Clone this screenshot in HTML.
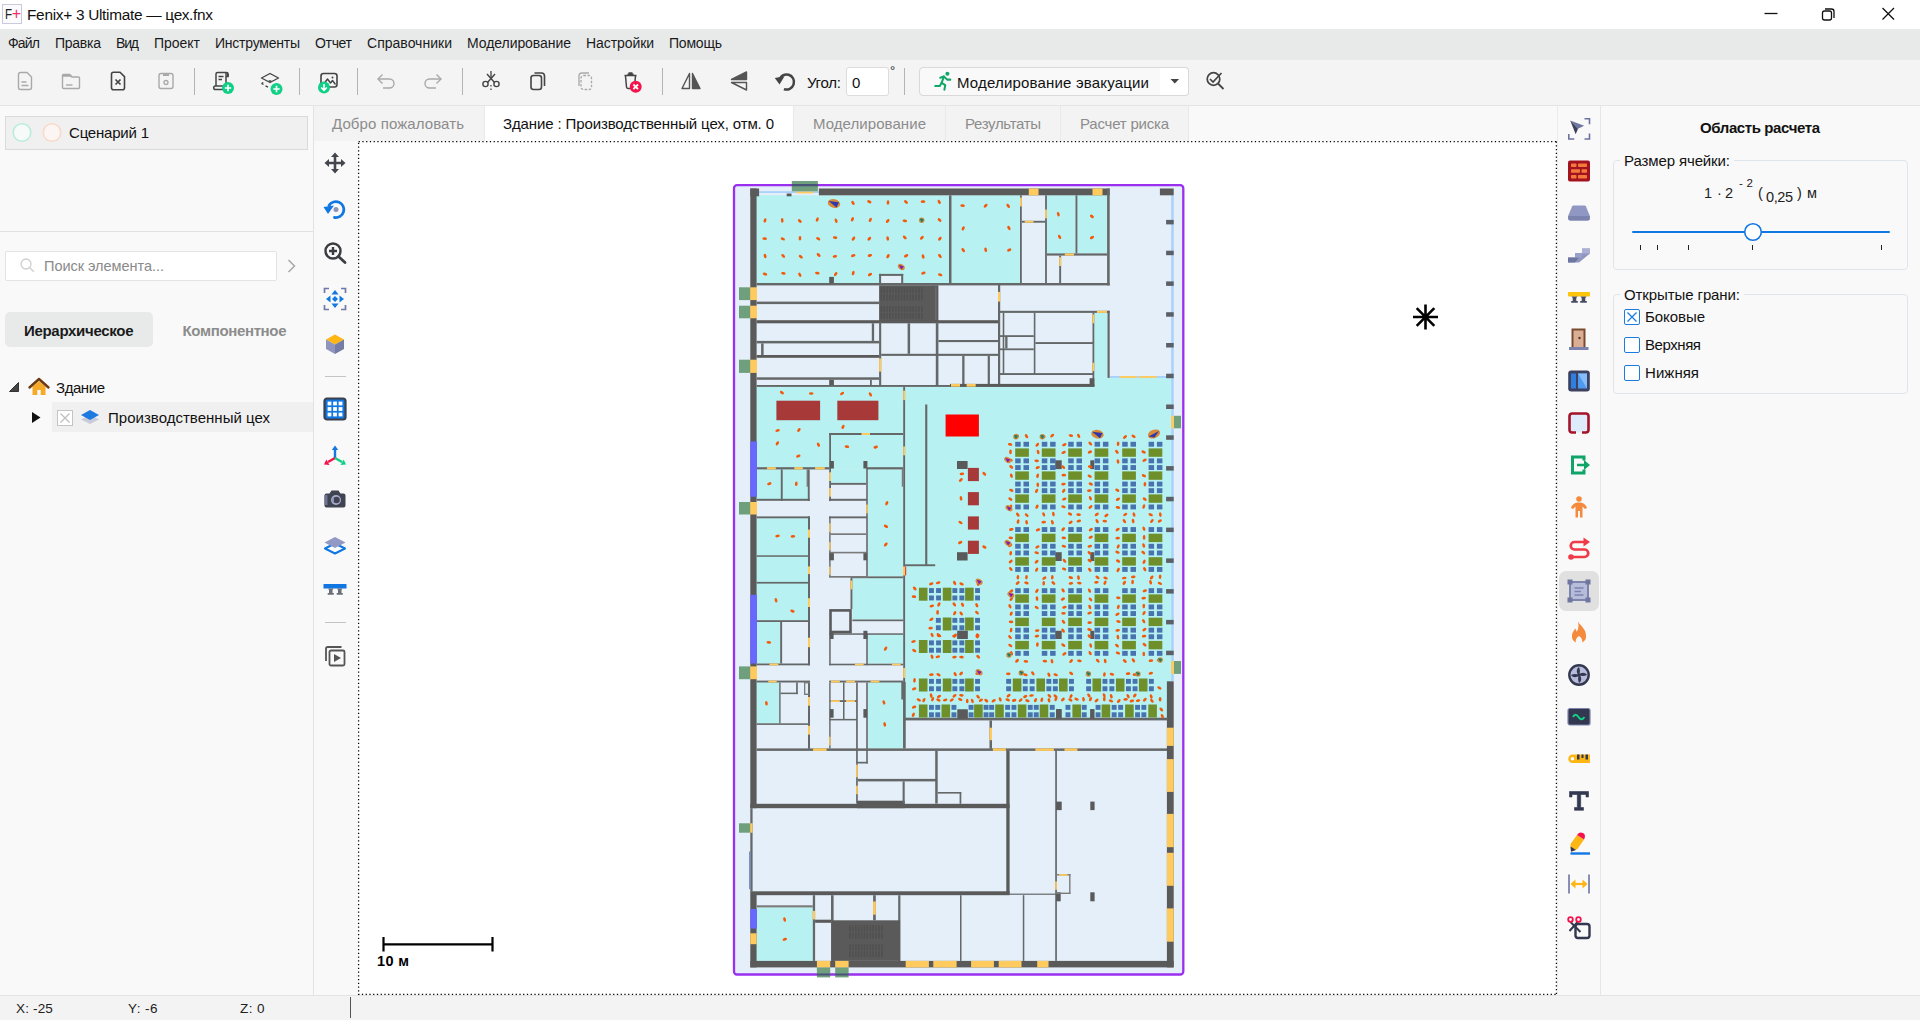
<!DOCTYPE html><html lang="ru"><head><meta charset="utf-8"><title>Fenix+ 3 Ultimate — цех.fnx</title><style>
*{box-sizing:border-box;margin:0;padding:0}
html,body{width:1920px;height:1020px;overflow:hidden;background:#fff}
body{font-family:"Liberation Sans","DejaVu Sans",sans-serif;color:#111;position:relative;font-size:14px}
.abs{position:absolute}
.t{position:absolute;white-space:nowrap;line-height:1}
svg{position:absolute;overflow:visible}
</style></head><body>
<div class="abs" style="left:0px;top:0px;width:1920px;height:29px;background:#ffffff;"></div>
<div class="abs" style="left:0px;top:29px;width:1920px;height:31px;background:#e8eaea;"></div>
<div class="abs" style="left:0px;top:60px;width:1920px;height:46px;background:#f4f4f4;"></div>
<div class="abs" style="left:0px;top:105px;width:1920px;height:1px;background:#e4e4e4;"></div>
<div class="abs" style="left:0px;top:106px;width:313px;height:889px;background:#f9f9f9;"></div>
<div class="abs" style="left:313px;top:106px;width:1px;height:889px;background:#e2e2e2;"></div>
<div class="abs" style="left:314px;top:106px;width:1287px;height:889px;background:#f9f9f9;"></div>
<div class="abs" style="left:1600px;top:106px;width:1.3px;height:889px;background:#e6e6e6;"></div>
<div class="abs" style="left:1557.3px;top:106px;width:1px;height:889px;background:#ececec;"></div>
<div class="abs" style="left:1601px;top:106px;width:319px;height:889px;background:#f9f9f9;"></div>
<div class="abs" style="left:0px;top:995px;width:1920px;height:25px;background:#f3f3f3;"></div>
<div class="abs" style="left:0px;top:995px;width:1920px;height:1px;background:#e4e4e4;"></div>
<div class="abs" style="left:2px;top:4px;width:20px;height:20px;background:#fbfbfd;border:1px solid #c9cbdc;"></div>
<div class="t" style="left:5.1px;top:6.63px;font-size:14.5px;font-weight:400;color:#222;letter-spacing:0.000px;transform:scaleX(.8);transform-origin:0 0;">F</div>
<div class="t" style="left:11.7px;top:5.71px;font-size:16px;font-weight:400;color:#f0306a;letter-spacing:0.000px;">+</div>
<div class="t" style="left:27px;top:6.86px;font-size:15.4px;font-weight:400;color:#111;letter-spacing:-0.288px;">Fenix+ 3 Ultimate — цех.fnx</div>
<svg style="left:1760px;top:4px" width="140" height="22" viewBox="0 0 140 22"><path d="M4.5 9.5h13" stroke="#111" stroke-width="1.3" fill="none"/><rect x="62.5" y="7" width="9" height="9" rx="2" fill="none" stroke="#111" stroke-width="1.3"/><path d="M65 5h6.5a2.5 2.5 0 0 1 2.5 2.5v6.500" fill="none" stroke="#111" stroke-width="1.3"/><path d="M122.500 4l11.500 11.500M134 4l-11.500 11.500" stroke="#111" stroke-width="1.3" fill="none"/></svg>
<div class="t" style="left:8px;top:36.15px;font-size:14px;font-weight:400;color:#1a1a1a;letter-spacing:-0.807px;">Файл</div>
<div class="t" style="left:55px;top:36.15px;font-size:14px;font-weight:400;color:#1a1a1a;letter-spacing:-0.259px;">Правка</div>
<div class="t" style="left:116px;top:36.15px;font-size:14px;font-weight:400;color:#1a1a1a;letter-spacing:-1.164px;">Вид</div>
<div class="t" style="left:154px;top:36.15px;font-size:14px;font-weight:400;color:#1a1a1a;letter-spacing:-0.025px;">Проект</div>
<div class="t" style="left:215px;top:36.15px;font-size:14px;font-weight:400;color:#1a1a1a;letter-spacing:-0.230px;">Инструменты</div>
<div class="t" style="left:315px;top:36.15px;font-size:14px;font-weight:400;color:#1a1a1a;letter-spacing:-0.336px;">Отчет</div>
<div class="t" style="left:367px;top:36.15px;font-size:14px;font-weight:400;color:#1a1a1a;letter-spacing:0.017px;">Справочники</div>
<div class="t" style="left:467px;top:36.15px;font-size:14px;font-weight:400;color:#1a1a1a;letter-spacing:-0.064px;">Моделирование</div>
<div class="t" style="left:586px;top:36.15px;font-size:14px;font-weight:400;color:#1a1a1a;letter-spacing:-0.082px;">Настройки</div>
<div class="t" style="left:669px;top:36.15px;font-size:14px;font-weight:400;color:#1a1a1a;letter-spacing:-0.216px;">Помощь</div>
<svg style="left:13.0px;top:69.2px" width="24" height="24" viewBox="0 0 24 24"><path d="M7.500 3.5h6.500l4.500 4.500v10.500a2 2 0 0 1-2 2h-9a2 2 0 0 1-2-2v-13a2 2 0 0 1 2-2z" fill="none" stroke="#a9a9a9" stroke-width="1.4"/><path d="M8.500 13h5M8.500 16.500h7" stroke="#a9a9a9" stroke-width="1.4" fill="none"/></svg>
<svg style="left:59.0px;top:69.2px" width="24" height="24" viewBox="0 0 24 24"><path d="M3.500 7v11.500a1 1 0 0 0 1 1h15a1 1 0 0 0 1-1v-9.500a1 1 0 0 0-1-1h-6.500l-2.500-2.500h-6a1 1 0 0 0-1 1z" fill="none" stroke="#a9a9a9" stroke-width="1.4"/><path d="M3.500 5.200h8l2 2.500h-10z" fill="#a9a9a9"/><path d="M7 16h6.500" stroke="#a9a9a9" stroke-width="1.4"/></svg>
<svg style="left:106.0px;top:69.2px" width="24" height="24" viewBox="0 0 24 24"><path d="M7.500 3.200h6.500l4.500 4.500v11a2 2 0 0 1-2 2h-9a2 2 0 0 1-2-2v-13.500a2 2 0 0 1 2-2z" fill="none" stroke="#444" stroke-width="1.6"/><path d="M9.500 10.500l5 5M14.500 10.500l-5 5" stroke="#444" stroke-width="1.7" fill="none"/></svg>
<svg style="left:154.0px;top:69.2px" width="24" height="24" viewBox="0 0 24 24"><rect x="5" y="4.500" width="14" height="15" rx="2" fill="none" stroke="#a9a9a9" stroke-width="1.4"/><rect x="9" y="5" width="6" height="2" fill="#a9a9a9"/><circle cx="12" cy="13.500" r="2" fill="none" stroke="#a9a9a9" stroke-width="1.3"/></svg>
<div class="abs" style="left:193.85px;top:68px;width:1.3px;height:27px;background:#b4b4b4;"></div>
<svg style="left:210.0px;top:69.2px" width="24" height="24" viewBox="0 0 24 24"><path d="M6 17v-12a1.500 1.500 0 0 1 1.500-1.500h9a1.500 1.500 0 0 1 1.500 1.500v2.500h-2" fill="none" stroke="#444" stroke-width="1.5"/><path d="M16 4v12.500" stroke="#444" stroke-width="1.500"/><path d="M17 3.500v4h1.800v-2.500z" fill="#444"/><path d="M8.500 7.500h5M8.500 10.500h3.500" stroke="#444" stroke-width="1.4"/><path d="M16 17h-10.500a1.800 1.800 0 0 0 0 3.600h9" fill="none" stroke="#444" stroke-width="1.5"/><circle cx="18" cy="19" r="6" fill="#10cf86"/><path d="M14.8 19h6.400M18 15.8v6.400" stroke="#fff" stroke-width="1.7"/></svg>
<svg style="left:258.0px;top:69.2px" width="24" height="24" viewBox="0 0 24 24"><path d="M3.500 9l8.500-4.500l8.500 4.500l-8.500 4.500z" fill="none" stroke="#444" stroke-width="1.4" stroke-linejoin="round"/><path d="M10 12l2-1l2 1l-2 1z" fill="#444"/><path d="M3.500 14.500l1.800-1M3.500 14.500l2 1M7.500 16.800l2.500 1.300" stroke="#444" stroke-width="1.3" fill="none"/><circle cx="18.5" cy="20" r="6" fill="#10cf86"/><path d="M15.3 20h6.400M18.5 16.8v6.400" stroke="#fff" stroke-width="1.7"/></svg>
<div class="abs" style="left:298.85px;top:68px;width:1.3px;height:27px;background:#b4b4b4;"></div>
<svg style="left:315.5px;top:69.2px" width="24" height="24" viewBox="0 0 24 24"><rect x="5" y="4.500" width="16" height="13.500" rx="2.500" fill="none" stroke="#444" stroke-width="1.6"/><path d="M7 16l4.500-6l3 4l2-2.500l3 4" fill="none" stroke="#444" stroke-width="1.4" stroke-linejoin="round"/><circle cx="16.500" cy="8.500" r="1" fill="#444"/><circle cx="8" cy="18.500" r="6" fill="#10cf86"/><path d="M8 15v6M5.200 18.500l2.800 2.800l2.800-2.800" stroke="#fff" stroke-width="1.600" fill="none"/></svg>
<div class="abs" style="left:356.85px;top:68px;width:1.3px;height:27px;background:#b4b4b4;"></div>
<svg style="left:374.0px;top:69.2px" width="24" height="24" viewBox="0 0 24 24"><path d="M8.500 5.500l-4.500 4.500l4.500 4.500" fill="none" stroke="#a9a9a9" stroke-width="1.400"/><path d="M4.500 10h11a4.500 4.500 0 0 1 0 9h-6.500" fill="none" stroke="#a9a9a9" stroke-width="1.400"/></svg>
<svg style="left:421.0px;top:69.2px" width="24" height="24" viewBox="0 0 24 24"><path d="M15.500 5.500l4.500 4.500l-4.500 4.500" fill="none" stroke="#a9a9a9" stroke-width="1.400"/><path d="M19.500 10h-11a4.500 4.500 0 0 0 0 9h6.500" fill="none" stroke="#a9a9a9" stroke-width="1.400"/></svg>
<div class="abs" style="left:461.85px;top:68px;width:1.3px;height:27px;background:#b4b4b4;"></div>
<svg style="left:479.0px;top:69.2px" width="24" height="24" viewBox="0 0 24 24"><path d="M12 2v7M12 16v1.500M12 19.500v1.500" stroke="#444" stroke-width="1.3"/><path d="M8 5l7.500 8.500M16 5l-7.500 8.500" stroke="#444" stroke-width="1.4"/><circle cx="6.500" cy="15" r="2.600" fill="none" stroke="#444" stroke-width="1.4"/><circle cx="17.500" cy="15" r="2.600" fill="none" stroke="#444" stroke-width="1.4"/></svg>
<svg style="left:526.0px;top:69.2px" width="24" height="24" viewBox="0 0 24 24"><rect x="5" y="6.500" width="10.500" height="14" rx="2.500" fill="none" stroke="#444" stroke-width="1.600"/><path d="M8.500 4h7a3 3 0 0 1 3 3v10" fill="none" stroke="#444" stroke-width="1.600"/></svg>
<svg style="left:574.0px;top:69.2px" width="24" height="24" viewBox="0 0 24 24"><rect x="7" y="6.500" width="10.500" height="14" rx="2.500" fill="none" stroke="#a9a9a9" stroke-width="1.300" stroke-dasharray="2.500 1.500"/><path d="M5 17v-10a3 3 0 0 1 3-3h7" fill="none" stroke="#a9a9a9" stroke-width="1.300"/></svg>
<svg style="left:619.0px;top:69.2px" width="24" height="24" viewBox="0 0 24 24"><path d="M5.500 6.500h12M9.500 4h4M8.500 5.200h6" stroke="#444" stroke-width="1.500" fill="none"/><path d="M6.500 7l1 11a1.500 1.500 0 0 0 1.500 1.400h3" fill="none" stroke="#444" stroke-width="1.500"/><path d="M16.500 7l-.5 5" stroke="#444" stroke-width="1.500"/><circle cx="16.700" cy="17.800" r="6" fill="#f5124d"/><path d="M14.400 15.500l4.600 4.600M19 15.500l-4.600 4.600" stroke="#fff" stroke-width="1.800"/></svg>
<div class="abs" style="left:661.85px;top:68px;width:1.3px;height:27px;background:#b4b4b4;"></div>
<svg style="left:679.0px;top:69.2px" width="24" height="24" viewBox="0 0 24 24"><path d="M10.500 4.500v15h-7.500z" fill="none" stroke="#555" stroke-width="1.400" stroke-linejoin="round"/><path d="M13.500 4.500v15h7.500z" fill="#555" stroke="#555" stroke-width="1.400" stroke-linejoin="round"/></svg>
<svg style="left:727.0px;top:69.2px" width="24" height="24" viewBox="0 0 24 24"><path d="M19.500 10.500h-15l15-7.500z" fill="#555" stroke="#555" stroke-width="1.400" stroke-linejoin="round"/><path d="M19.500 13.500h-15l15 7.500z" fill="none" stroke="#555" stroke-width="1.400" stroke-linejoin="round"/></svg>
<svg style="left:774.0px;top:69.2px" width="24" height="24" viewBox="0 0 24 24"><path d="M5.260 11.060A7.500 7.500 0 1 1 9.930 20.050" fill="none" stroke="#444" stroke-width="2.500"/><path d="M0.800 9l9.700-1.800l-5 8.300z" fill="#444"/></svg>
<div class="t" style="left:807px;top:74.60px;font-size:15px;font-weight:400;color:#111;letter-spacing:-0.234px;">Угол:</div>
<div class="abs" style="left:845.5px;top:66.5px;width:43px;height:29px;background:#fff;border:1px solid #dcdcdc;border-radius:3px;"></div>
<div class="t" style="left:852px;top:74.60px;font-size:15px;font-weight:400;color:#111;letter-spacing:0.000px;">0</div>
<div class="t" style="left:890px;top:63.50px;font-size:13px;font-weight:400;color:#222;letter-spacing:0.000px;">°</div>
<div class="abs" style="left:903.85px;top:68px;width:1.3px;height:27px;background:#b4b4b4;"></div>
<div class="abs" style="left:919px;top:66.5px;width:241.5px;height:29.5px;background:#f9f9f9;border:1px solid #d9d9d9;border-radius:4px 0 0 4px;"></div>
<div class="abs" style="left:1160px;top:66.5px;width:28.5px;height:29.5px;background:#ffffff;border:1px solid #d9d9d9;border-left:none;border-radius:0 4px 4px 0;"></div>
<svg style="left:932.0px;top:70.0px" width="22" height="22" viewBox="0 0 24 24"><g fill="none" stroke="#10a868" stroke-width="2.200" stroke-linecap="round" stroke-linejoin="round"><path d="M9 8.500l4-1.500l-2.500 7l4 2.500l-1 5"/><path d="M13 7l3.500 3.500h3.500"/><path d="M10.500 14l-2 3.500h-5"/></g><circle cx="16.800" cy="4.200" r="2.200" fill="#10a868"/></svg>
<div class="t" style="left:957px;top:74.70px;font-size:15px;font-weight:400;color:#111;letter-spacing:0.183px;">Моделирование эвакуации</div>
<svg style="left:1169px;top:77px" width="12" height="8" viewBox="0 0 12 8"><path d="M1.500 2h8.600l-4.300 4.600z" fill="#444"/></svg>
<svg style="left:1203.0px;top:69.2px" width="24" height="24" viewBox="0 0 24 24"><circle cx="10.500" cy="10" r="6.300" fill="none" stroke="#444" stroke-width="1.700"/><path d="M15 14.500l5.500 5.500" stroke="#444" stroke-width="1.800"/><path d="M7 10l3 3l8.500-9" fill="none" stroke="#444" stroke-width="1.700"/></svg>
<div class="abs" style="left:5px;top:116px;width:303px;height:33.5px;background:#f0f0f0;border:1px solid #dadada;"></div>
<svg style="left:11px;top:121px" width="52" height="24" viewBox="0 0 52 24"><circle cx="11" cy="11.500" r="8.800" fill="#f6fbf9" stroke="#b9ecd9" stroke-width="1.600"/><circle cx="41" cy="11.500" r="8.800" fill="#fbf6f3" stroke="#f9d9c8" stroke-width="1.600"/></svg>
<div class="t" style="left:69px;top:125.30px;font-size:15px;font-weight:400;color:#111;letter-spacing:-0.205px;">Сценарий 1</div>
<div class="abs" style="left:0px;top:231px;width:313px;height:1px;background:#e2e2e2;"></div>
<div class="abs" style="left:5px;top:250.5px;width:271.5px;height:30px;background:#fff;border:1px solid #e3e3e3;border-radius:2px;"></div>
<svg style="left:19px;top:257px" width="18" height="18" viewBox="0 0 18 18"><circle cx="7" cy="7" r="5" fill="none" stroke="#cfcfcf" stroke-width="1.300"/><path d="M10.800 10.800l4 4" stroke="#cfcfcf" stroke-width="1.300"/></svg>
<div class="t" style="left:44px;top:259.23px;font-size:14.5px;font-weight:400;color:#8a8a8a;letter-spacing:-0.030px;">Поиск элемента...</div>
<svg style="left:285px;top:258px" width="14" height="16" viewBox="0 0 14 16"><path d="M3.500 2l6 6l-6 6" fill="none" stroke="#a8a8a8" stroke-width="1.500"/></svg>
<div class="abs" style="left:5px;top:312px;width:148px;height:34.5px;background:#e8eaea;border-radius:5px;"></div>
<div class="t" style="left:24px;top:322.80px;font-size:15px;font-weight:700;color:#1a1a1a;letter-spacing:-0.306px;-webkit-text-stroke:0">Иерархическое</div>
<div class="t" style="left:182.5px;top:322.80px;font-size:15px;font-weight:700;color:#8c8c8c;letter-spacing:-0.347px;">Компонентное</div>
<svg style="left:8px;top:381px" width="12" height="12" viewBox="0 0 12 12"><path d="M10.500 1.500v9h-9z" fill="#444" stroke="#333" stroke-width="1"/></svg>
<svg style="left:28px;top:377px" width="22" height="20" viewBox="0 0 22 20"><path d="M4.500 9.500v8.500h4.800v-5h3.400v5h4.800v-8.500l-6.500-5.500z" fill="#f7a928"/><path d="M1.500 10.500l9.500-8.500l9.500 8.500" fill="none" stroke="#6b3a12" stroke-width="2.400" stroke-linejoin="round" stroke-linecap="round"/></svg>
<div class="t" style="left:56px;top:380.30px;font-size:15px;font-weight:400;color:#111;letter-spacing:-0.434px;">Здание</div>
<div class="abs" style="left:52px;top:402px;width:261px;height:30px;background:#f0f0f0;"></div>
<svg style="left:31px;top:411px" width="10" height="13" viewBox="0 0 10 13"><path d="M1 1v11l8.500-5.500z" fill="#111"/></svg>
<div class="abs" style="left:57px;top:409.5px;width:16px;height:16px;background:#fff;border:1px solid #c4c4c4;"></div>
<svg style="left:57px;top:409.5px" width="16" height="16" viewBox="0 0 16 16"><path d="M3.500 3.500l9 9M12.500 3.500l-9 9" stroke="#bdbdbd" stroke-width="1.200"/></svg>
<svg style="left:79px;top:407px" width="22" height="20" viewBox="0 0 22 20"><path d="M2 12.500l9 4.500l9-4.500l-9-4.500z" fill="#c9cbdb"/><path d="M2 8l9-5l9 5l-9 5z" fill="#1f7ae0"/></svg>
<div class="t" style="left:108px;top:410.30px;font-size:15px;font-weight:400;color:#111;letter-spacing:0.019px;">Производственный цех</div>
<div class="abs" style="left:314px;top:106px;width:874.5px;height:34.5px;background:#f3f3f3;"></div>
<div class="abs" style="left:484px;top:106px;width:309px;height:34.5px;background:#ffffff;"></div>
<div class="abs" style="left:484px;top:106px;width:1px;height:34.5px;background:#e9e9e9;"></div>
<div class="abs" style="left:793px;top:106px;width:1px;height:34.5px;background:#e9e9e9;"></div>
<div class="abs" style="left:945px;top:106px;width:1px;height:34.5px;background:#e9e9e9;"></div>
<div class="abs" style="left:1060px;top:106px;width:1px;height:34.5px;background:#e9e9e9;"></div>
<div class="abs" style="left:1188px;top:106px;width:1px;height:34.5px;background:#e9e9e9;"></div>
<div class="abs" style="left:314px;top:106px;width:870px;height:34.5px;"></div>
<div class="t" style="left:332px;top:115.70px;font-size:15px;font-weight:400;color:#8c8c8c;letter-spacing:0.097px;">Добро пожаловать</div>
<div class="t" style="left:503px;top:115.70px;font-size:15px;font-weight:400;color:#111;letter-spacing:-0.125px;">Здание : Производственный цех, отм. 0</div>
<div class="t" style="left:813px;top:115.70px;font-size:15px;font-weight:400;color:#8c8c8c;letter-spacing:0.062px;">Моделирование</div>
<div class="t" style="left:965px;top:115.70px;font-size:15px;font-weight:400;color:#8c8c8c;letter-spacing:-0.333px;">Результаты</div>
<div class="t" style="left:1080px;top:115.70px;font-size:15px;font-weight:400;color:#8c8c8c;letter-spacing:-0.213px;">Расчет риска</div>
<svg style="left:323.0px;top:151.0px" width="24" height="24" viewBox="0 0 24 24"><path d="M12 1.500l4 4.500h-2.700v4.700h4.700v-2.700l4.500 4l-4.500 4v-2.700h-4.700v4.700h2.700l-4 4.500l-4-4.500h2.700v-4.700h-4.700v2.700l-4.500-4l4.500-4v2.700h4.700v-4.700h-2.700z" fill="#43464d"/></svg>
<svg style="left:323.0px;top:197.0px" width="24" height="24" viewBox="0 0 24 24"><path d="M6 8.500a8 8 0 1 1 5.500 12" fill="none" stroke="#1177e2" stroke-width="2.800" stroke-linecap="round"/><path d="M0.500 10l10.500-1.500l-6 8.500z" fill="#1177e2"/><circle cx="13" cy="12.500" r="2.500" fill="#8d93b8"/></svg>
<svg style="left:323.0px;top:241.0px" width="24" height="24" viewBox="0 0 24 24"><circle cx="10" cy="10" r="7.500" fill="none" stroke="#3a3d42" stroke-width="2.400"/><path d="M15.500 15.500l6.500 6" stroke="#3a3d42" stroke-width="2.800" stroke-linecap="round"/><path d="M6 10h8M10 6v8" stroke="#3a3d42" stroke-width="2.400"/></svg>
<svg style="left:323.0px;top:287.0px" width="24" height="24" viewBox="0 0 24 24"><path d="M1.500 6v-4.500h4.500M18 1.500h4.500v4.500M22.500 18v4.500h-4.500M6 22.500h-4.500v-4.500" fill="none" stroke="#7079a6" stroke-width="1.700"/><g fill="#1177e2"><path d="M12 3l3.600 4.500h-7.200z"/><path d="M12 21l3.600-4.500h-7.200z"/><path d="M3 12l4.500-3.600v7.200z"/><path d="M21 12l-4.500-3.600v7.200z"/><path d="M9 12l3-3l3 3l-3 3z"/></g></svg>
<svg style="left:323.0px;top:332.0px" width="24" height="24" viewBox="0 0 24 24"><path d="M12 2.500l9 5l-9 5l-9-5z" fill="#fdb614"/><path d="M3 7.500l9 5v9.500l-9-5z" fill="#8f95bd"/><path d="M21 7.500l-9 5v9.500l9-5z" fill="#757ca5"/></svg>
<div class="abs" style="left:325px;top:376px;width:21px;height:1.3px;background:#c4c4c4;"></div>
<svg style="left:323.0px;top:397.0px" width="24" height="24" viewBox="0 0 24 24"><rect x="1.500" y="1.500" width="21" height="21" rx="2.500" fill="#1177e2" stroke="#3a3f4b" stroke-width="2.200"/><g fill="#fff"><rect x="4.600" y="4.600" width="3.800" height="3.800"/><rect x="10.100" y="4.600" width="3.800" height="3.800"/><rect x="15.600" y="4.600" width="3.800" height="3.800"/><rect x="4.600" y="10.100" width="3.800" height="3.800"/><rect x="10.100" y="10.100" width="3.800" height="3.800"/><rect x="15.600" y="10.100" width="3.800" height="3.800"/><rect x="4.600" y="15.600" width="3.800" height="3.800"/><rect x="10.100" y="15.600" width="3.800" height="3.800"/><rect x="15.600" y="15.600" width="3.800" height="3.800"/></g></svg>
<svg style="left:323.0px;top:444.0px" width="24" height="24" viewBox="0 0 24 24"><path d="M12 5v9" stroke="#1177e2" stroke-width="2.400"/><path d="M12 1.500l3.200 4.500h-6.400z" fill="#1177e2"/><path d="M12 14l-7 4" stroke="#f5124d" stroke-width="2.400"/><path d="M1 20.500l2.300-5l3.200 5.500z" fill="#f5124d"/><path d="M12 14l7 4" stroke="#10cf86" stroke-width="2.400"/><path d="M23 20.500l-2.300-5l-3.200 5.500z" fill="#10cf86"/></svg>
<svg style="left:323.0px;top:487.0px" width="24" height="24" viewBox="0 0 24 24"><path d="M3.500 6.500h3l2-3h7l2 3h3a2 2 0 0 1 2 2v10a2 2 0 0 1-2 2h-17a2 2 0 0 1-2-2v-10a2 2 0 0 1 2-2z" fill="#3f4450"/><rect x="1.500" y="8" width="3" height="10" fill="#6d7391"/><circle cx="13" cy="13" r="5" fill="#a9aed0"/><circle cx="13.500" cy="13" r="3.300" fill="#3f4450"/><path d="M11 9.500a4 4 0 0 0 0 7z" fill="#8d93b8"/></svg>
<svg style="left:323.0px;top:534.0px" width="24" height="24" viewBox="0 0 24 24"><path d="M2 14.500l10-5l10 5l-10 5z" fill="#fff" stroke="#1177e2" stroke-width="2" stroke-linejoin="round"/><path d="M1.500 8.500l10.500-5.500l10.500 5.500l-10.500 5.500z" fill="#9299c4"/></svg>
<svg style="left:323.0px;top:577.0px" width="24" height="24" viewBox="0 0 24 24"><rect x="0.500" y="7" width="23" height="4.500" fill="#1177e2"/><path d="M5 11.500h5.500l-1 1.500v3h1.300v1.800h-6.100v-1.800h1.300v-3zM14 11.500h5.500l-1 1.500v3h1.300v1.800h-6.100v-1.800h1.300v-3z" fill="#6b6f7a"/></svg>
<div class="abs" style="left:325px;top:622px;width:21px;height:1.3px;background:#c4c4c4;"></div>
<svg style="left:323.0px;top:644.0px" width="24" height="24" viewBox="0 0 24 24"><path d="M3 17v-12.500a1.500 1.500 0 0 1 1.500-1.500h14" fill="none" stroke="#555" stroke-width="1.800"/><rect x="6.500" y="6.500" width="15" height="15" rx="1.500" fill="none" stroke="#555" stroke-width="1.800"/><path d="M11 10v8l7-4z" fill="#555"/></svg>
<div class="abs" style="left:358px;top:141px;width:1199.3px;height:854.3px;background:#ffffff;"></div>
<svg style="left:0;top:0" width="1920" height="1020" viewBox="0 0 1920 1020"><g fill="none" stroke="#000" stroke-width="1.250" stroke-dasharray="1.250 2.500"><path d="M358.600 141.600H1557"/><path d="M358.125 994.400H1557"/><path d="M358.600 142.800V995"/><path d="M1556.400 141.375V995"/></g><rect x="734" y="185.2" width="449.300" height="789.300" rx="3" fill="#e4eff9" stroke="#9a2ff0" stroke-width="2.300"/><rect x="756.6" y="195.3" width="192.4" height="87.9" fill="#b7f1f1"/><rect x="951.5" y="195.3" width="68.5" height="87.9" fill="#b7f1f1"/><rect x="1046.9" y="195.3" width="28.6" height="58.1" fill="#b7f1f1"/><rect x="1077.4" y="195.3" width="29.7" height="58.1" fill="#b7f1f1"/><rect x="756.6" y="386.9" width="146.6" height="82.5" fill="#b7f1f1"/><rect x="756.6" y="469.4" width="51.4" height="29.6" fill="#b7f1f1"/><rect x="831.0" y="469.4" width="35.2" height="13.5" fill="#b7f1f1"/><rect x="867.8" y="469.4" width="35.4" height="107.0" fill="#b7f1f1"/><rect x="905.1" y="386.9" width="266.1" height="330.8" fill="#b7f1f1"/><rect x="1094.3" y="377.9" width="76.9" height="9.0" fill="#b7f1f1"/><rect x="1094.3" y="312.9" width="13.2" height="65.0" fill="#b7f1f1"/><rect x="756.6" y="518.3" width="51.4" height="101.9" fill="#b7f1f1"/><rect x="756.6" y="622.0" width="23.6" height="41.5" fill="#b7f1f1"/><rect x="852.4" y="578.2" width="50.8" height="41.3" fill="#b7f1f1"/><rect x="867.8" y="634.6" width="35.4" height="28.9" fill="#b7f1f1"/><rect x="756.6" y="682.5" width="22.6" height="40.8" fill="#b7f1f1"/><rect x="867.8" y="682.5" width="35.4" height="65.9" fill="#b7f1f1"/><rect x="756.6" y="907.4" width="56.2" height="53.5" fill="#b7f1f1"/><rect x="1171.2" y="195.3" width="2.5" height="485.7" fill="#a8d1fb"/><rect x="1109.7" y="376.0" width="61.5" height="1.9" fill="#a8d1fb"/><rect x="759.1" y="191.2" width="59.8" height="1.8" fill="#a8d1fb"/><rect x="1159.9" y="188.5" width="13.8" height="6.8" fill="#5a5a5a"/><rect x="1166.1" y="219.9" width="7.6" height="4.5" fill="#5c5f66"/><rect x="1166.1" y="250.7" width="7.6" height="4.5" fill="#5c5f66"/><rect x="1166.1" y="281.4" width="7.6" height="4.5" fill="#5c5f66"/><rect x="1166.1" y="312.2" width="7.6" height="4.5" fill="#5c5f66"/><rect x="1166.1" y="343.0" width="7.6" height="4.5" fill="#5c5f66"/><rect x="1166.1" y="373.7" width="7.6" height="4.5" fill="#5c5f66"/><rect x="1166.1" y="404.5" width="7.6" height="4.5" fill="#5c5f66"/><rect x="1166.1" y="435.3" width="7.6" height="4.5" fill="#5c5f66"/><rect x="1166.1" y="466.1" width="7.6" height="4.5" fill="#5c5f66"/><rect x="1166.1" y="496.8" width="7.6" height="4.5" fill="#5c5f66"/><rect x="1166.1" y="527.6" width="7.6" height="4.5" fill="#5c5f66"/><rect x="1166.1" y="558.4" width="7.6" height="4.5" fill="#5c5f66"/><rect x="1166.1" y="589.1" width="7.6" height="4.5" fill="#5c5f66"/><rect x="1166.1" y="619.9" width="7.6" height="4.5" fill="#5c5f66"/><rect x="1166.1" y="650.7" width="7.6" height="4.5" fill="#5c5f66"/><rect x="881.1" y="275.9" width="20.1" height="7.3" fill="#e4eff9"/><rect x="750.3" y="188.5" width="6.3" height="619.7" fill="#5a5a5a"/><rect x="750.3" y="188.5" width="8.8" height="7.8" fill="#5a5a5a"/><rect x="818.9" y="188.5" width="290.8" height="6.8" fill="#5a5a5a"/><rect x="786.7" y="193.5" width="4.8" height="2.8" fill="#5a5a5a"/><rect x="1107.1" y="188.5" width="2.6" height="96.9" fill="#656868"/><rect x="750.3" y="803.8" width="259.3" height="4.4" fill="#5a5a5a"/><rect x="857.0" y="800.7" width="47.7" height="7.5" fill="#5a5a5a"/><rect x="750.3" y="808.2" width="2.3" height="83.3" fill="#656868"/><rect x="750.3" y="891.3" width="259.3" height="3.9" fill="#5a5a5a"/><rect x="750.3" y="895.0" width="6.3" height="72.4" fill="#5a5a5a"/><rect x="750.3" y="960.9" width="423.4" height="6.5" fill="#5a5a5a"/><rect x="1166.9" y="681.3" width="6.8" height="286.1" fill="#5a5a5a"/><rect x="949.0" y="195.3" width="2.5" height="87.9" fill="#656868"/><rect x="756.6" y="283.0" width="353.1" height="2.4" fill="#656868"/><rect x="829.2" y="276.9" width="4.7" height="6.3" fill="#5a5a5a"/><rect x="1020.0" y="195.3" width="1.8" height="87.9" fill="#656868"/><rect x="1045.1" y="195.3" width="1.8" height="87.9" fill="#656868"/><rect x="1021.8" y="220.8" width="23.3" height="1.9" fill="#656868"/><rect x="1075.5" y="195.3" width="1.9" height="58.1" fill="#656868"/><rect x="1046.9" y="253.4" width="60.2" height="2.2" fill="#656868"/><rect x="1059.2" y="255.6" width="1.9" height="27.6" fill="#656868"/><rect x="879.1" y="273.9" width="24.1" height="2.0" fill="#656868"/><rect x="879.1" y="273.9" width="2.0" height="9.3" fill="#656868"/><rect x="901.2" y="273.9" width="2.0" height="9.3" fill="#656868"/><rect x="879.1" y="285.3" width="59.3" height="36.7" fill="#5a5a5a"/><rect x="756.6" y="301.6" width="122.5" height="2.5" fill="#656868"/><rect x="756.6" y="320.2" width="241.4" height="3.1" fill="#5a5a5a"/><rect x="756.6" y="340.9" width="122.5" height="2.5" fill="#656868"/><rect x="756.6" y="355.0" width="122.5" height="2.8" fill="#5a5a5a"/><rect x="756.6" y="377.3" width="122.5" height="2.5" fill="#656868"/><rect x="756.6" y="385.0" width="337.7" height="1.9" fill="#656868"/><rect x="871.8" y="323.3" width="2.3" height="17.6" fill="#656868"/><rect x="761.1" y="343.4" width="2.5" height="11.6" fill="#656868"/><rect x="829.2" y="379.8" width="4.7" height="5.4" fill="#5a5a5a"/><rect x="870.0" y="379.8" width="1.8" height="5.4" fill="#656868"/><rect x="879.1" y="322.0" width="2.1" height="63.4" fill="#656868"/><rect x="907.6" y="323.3" width="2.5" height="30.5" fill="#656868"/><rect x="935.8" y="322.0" width="2.6" height="63.4" fill="#656868"/><rect x="881.2" y="353.8" width="116.8" height="2.1" fill="#656868"/><rect x="938.4" y="340.0" width="59.6" height="2.1" fill="#656868"/><rect x="962.2" y="355.9" width="2.3" height="29.3" fill="#656868"/><rect x="987.7" y="355.9" width="2.2" height="29.3" fill="#656868"/><rect x="998.0" y="285.0" width="2.2" height="100.4" fill="#656868"/><rect x="950.0" y="383.9" width="144.3" height="2.8" fill="#5a5a5a"/><rect x="1000.0" y="310.8" width="109.7" height="2.1" fill="#656868"/><rect x="1107.5" y="310.8" width="2.2" height="67.1" fill="#656868"/><rect x="1092.5" y="312.9" width="1.8" height="73.8" fill="#656868"/><rect x="1089.6" y="378.2" width="4.7" height="7.8" fill="#5a5a5a"/><rect x="1002.7" y="312.9" width="1.6" height="61.2" fill="#656868"/><rect x="1033.8" y="312.9" width="1.6" height="61.2" fill="#656868"/><rect x="1000.0" y="335.2" width="33.8" height="1.8" fill="#656868"/><rect x="1000.0" y="348.4" width="33.8" height="1.8" fill="#656868"/><rect x="1005.2" y="337.0" width="2.3" height="11.4" fill="#656868"/><rect x="1035.4" y="342.1" width="57.7" height="1.9" fill="#656868"/><rect x="1000.0" y="373.1" width="93.1" height="1.9" fill="#656868"/><rect x="903.2" y="386.9" width="1.9" height="361.5" fill="#656868"/><rect x="925.2" y="404.5" width="2.1" height="161.5" fill="#656868"/><rect x="905.1" y="564.3" width="30.1" height="1.9" fill="#656868"/><rect x="829.2" y="433.0" width="74.0" height="2.0" fill="#656868"/><rect x="829.2" y="433.0" width="1.8" height="68.1" fill="#656868"/><rect x="829.8" y="461.0" width="4.1" height="7.5" fill="#5a5a5a"/><rect x="863.4" y="461.0" width="4.0" height="7.5" fill="#5a5a5a"/><rect x="756.6" y="467.2" width="72.6" height="2.2" fill="#656868"/><rect x="866.2" y="467.2" width="37.0" height="2.2" fill="#656868"/><rect x="780.8" y="469.4" width="1.9" height="31.6" fill="#656868"/><rect x="807.8" y="469.4" width="1.9" height="31.6" fill="#656868"/><rect x="756.6" y="498.8" width="53.1" height="2.0" fill="#656868"/><rect x="829.2" y="498.8" width="37.8" height="2.0" fill="#656868"/><rect x="866.2" y="468.5" width="1.6" height="108.8" fill="#656868"/><rect x="831.0" y="482.9" width="35.2" height="1.9" fill="#656868"/><rect x="756.6" y="516.4" width="53.1" height="1.9" fill="#656868"/><rect x="829.2" y="516.4" width="37.8" height="1.9" fill="#656868"/><rect x="808.0" y="516.4" width="2.0" height="148.9" fill="#656868"/><rect x="756.6" y="555.3" width="51.4" height="1.5" fill="#656868"/><rect x="756.6" y="581.9" width="51.4" height="1.7" fill="#656868"/><rect x="756.6" y="620.2" width="51.4" height="1.8" fill="#656868"/><rect x="780.2" y="622.0" width="1.9" height="41.5" fill="#656868"/><rect x="756.6" y="663.5" width="53.4" height="1.8" fill="#656868"/><rect x="829.2" y="516.4" width="1.4" height="60.9" fill="#656868"/><rect x="829.4" y="552.5" width="4.5" height="7.8" fill="#5a5a5a"/><rect x="863.4" y="552.5" width="3.7" height="7.8" fill="#5a5a5a"/><rect x="851.1" y="576.4" width="52.1" height="1.8" fill="#656868"/><rect x="850.5" y="576.4" width="1.9" height="32.7" fill="#656868"/><rect x="852.4" y="619.5" width="50.8" height="1.7" fill="#656868"/><rect x="867.0" y="633.3" width="36.2" height="1.5" fill="#656868"/><rect x="866.2" y="633.3" width="1.6" height="32.0" fill="#656868"/><rect x="829.2" y="663.7" width="74.0" height="1.6" fill="#656868"/><rect x="829.2" y="633.3" width="1.5" height="32.0" fill="#656868"/><rect x="829.2" y="633.3" width="37.9" height="1.5" fill="#656868"/><rect x="829.8" y="630.8" width="3.8" height="8.2" fill="#5a5a5a"/><rect x="863.4" y="630.8" width="4.0" height="8.2" fill="#5a5a5a"/><rect x="756.6" y="680.6" width="53.4" height="1.9" fill="#656868"/><rect x="829.2" y="680.6" width="74.0" height="1.9" fill="#656868"/><rect x="779.2" y="682.5" width="1.4" height="40.8" fill="#656868"/><rect x="756.6" y="723.3" width="53.4" height="1.6" fill="#656868"/><rect x="780.5" y="692.6" width="17.3" height="1.5" fill="#656868"/><rect x="796.1" y="682.5" width="1.7" height="11.6" fill="#656868"/><rect x="808.0" y="682.5" width="2.0" height="66.3" fill="#656868"/><rect x="829.2" y="682.5" width="1.4" height="65.9" fill="#656868"/><rect x="843.0" y="682.5" width="1.5" height="37.4" fill="#656868"/><rect x="856.1" y="682.5" width="1.7" height="81.0" fill="#656868"/><rect x="866.2" y="682.5" width="1.6" height="81.0" fill="#656868"/><rect x="856.1" y="761.8" width="11.7" height="1.7" fill="#656868"/><rect x="830.4" y="700.2" width="26.6" height="1.8" fill="#656868"/><rect x="829.2" y="718.9" width="27.8" height="1.5" fill="#656868"/><rect x="829.8" y="709.1" width="3.8" height="8.6" fill="#5a5a5a"/><rect x="863.4" y="709.1" width="3.7" height="8.6" fill="#5a5a5a"/><rect x="901.3" y="681.9" width="2.5" height="17.6" fill="#656868"/><rect x="903.2" y="682.0" width="2.5" height="66.4" fill="#656868"/><rect x="904.7" y="717.7" width="263.1" height="2.7" fill="#656868"/><rect x="756.6" y="748.4" width="410.4" height="2.5" fill="#656868"/><rect x="989.5" y="720.4" width="2.5" height="28.4" fill="#656868"/><rect x="856.1" y="763.5" width="1.7" height="40.1" fill="#656868"/><rect x="857.8" y="778.9" width="79.3" height="2.5" fill="#656868"/><rect x="902.6" y="781.4" width="2.1" height="22.2" fill="#656868"/><rect x="935.2" y="750.9" width="2.5" height="52.7" fill="#656868"/><rect x="937.7" y="792.0" width="23.5" height="1.6" fill="#656868"/><rect x="959.6" y="792.0" width="1.7" height="11.8" fill="#656868"/><rect x="1006.3" y="750.9" width="3.3" height="143.9" fill="#5a5a5a"/><rect x="1055.2" y="750.9" width="1.7" height="210.0" fill="#656868"/><rect x="1009.6" y="893.6" width="47.1" height="1.2" fill="#656868"/><rect x="1056.1" y="801.6" width="5.6" height="8.5" fill="#5a5a5a"/><rect x="1090.3" y="801.6" width="4.3" height="8.5" fill="#5a5a5a"/><rect x="1056.1" y="892.3" width="4.6" height="9.0" fill="#5a5a5a"/><rect x="1090.3" y="892.3" width="4.3" height="9.0" fill="#5a5a5a"/><rect x="812.8" y="895.2" width="2.3" height="65.7" fill="#656868"/><rect x="831.0" y="895.2" width="2.6" height="65.7" fill="#656868"/><rect x="873.1" y="895.2" width="2.7" height="25.1" fill="#656868"/><rect x="898.2" y="895.2" width="2.2" height="65.7" fill="#656868"/><rect x="815.1" y="919.7" width="15.9" height="3.1" fill="#5a5a5a"/><rect x="831.7" y="920.3" width="68.4" height="40.6" fill="#5a5a5a"/><rect x="960.0" y="895.2" width="1.5" height="65.7" fill="#656868"/><rect x="1022.8" y="895.2" width="1.5" height="65.7" fill="#656868"/><rect x="830.4" y="533.3" width="35.8" height="1.7" fill="#7a7a7a"/><rect x="830.4" y="551.8" width="35.8" height="1.6" fill="#7a7a7a"/><rect x="829.2" y="576.0" width="38.6" height="1.7" fill="#7a7a7a"/><rect x="756.6" y="905.3" width="56.2" height="2.1" fill="#7a7a7a"/><rect x="806.6" y="469.4" width="1.4" height="17.3" fill="#7a7a7a"/><rect x="901.8" y="468.5" width="1.4" height="18.2" fill="#7a7a7a"/><rect x="804.0" y="682.0" width="5.3" height="1.4" fill="#7a7a7a"/><rect x="804.0" y="693.6" width="5.3" height="1.4" fill="#7a7a7a"/><rect x="804.0" y="682.0" width="1.3" height="13.0" fill="#7a7a7a"/><rect x="1055.4" y="874.1" width="15.1" height="1.4" fill="#7a7a7a"/><rect x="1069.1" y="874.1" width="1.4" height="19.9" fill="#7a7a7a"/><rect x="1055.4" y="892.6" width="15.1" height="1.4" fill="#7a7a7a"/><rect x="830.500" y="610.400" width="20" height="21.600" fill="#e4eff9" stroke="#5a5a5a" stroke-width="2.600"/><rect x="935.2" y="287.0" width="1.2" height="33.0" fill="#707070"/><rect x="880.5" y="287.0" width="1.6" height="6.2" fill="#505050"/><rect x="880.5" y="294.3" width="1.6" height="6.2" fill="#505050"/><rect x="883.4" y="287.0" width="1.6" height="6.2" fill="#505050"/><rect x="883.4" y="294.3" width="1.6" height="6.2" fill="#505050"/><rect x="886.3" y="287.0" width="1.6" height="6.2" fill="#505050"/><rect x="886.3" y="294.3" width="1.6" height="6.2" fill="#505050"/><rect x="889.2" y="287.0" width="1.6" height="6.2" fill="#505050"/><rect x="889.2" y="294.3" width="1.6" height="6.2" fill="#505050"/><rect x="892.1" y="287.0" width="1.6" height="6.2" fill="#505050"/><rect x="892.1" y="294.3" width="1.6" height="6.2" fill="#505050"/><rect x="895.0" y="287.0" width="1.6" height="6.2" fill="#505050"/><rect x="895.0" y="294.3" width="1.6" height="6.2" fill="#505050"/><rect x="897.9" y="287.0" width="1.6" height="6.2" fill="#505050"/><rect x="897.9" y="294.3" width="1.6" height="6.2" fill="#505050"/><rect x="900.8" y="287.0" width="1.6" height="6.2" fill="#505050"/><rect x="900.8" y="294.3" width="1.6" height="6.2" fill="#505050"/><rect x="903.7" y="287.0" width="1.6" height="6.2" fill="#505050"/><rect x="903.7" y="294.3" width="1.6" height="6.2" fill="#505050"/><rect x="906.6" y="287.0" width="1.6" height="6.2" fill="#505050"/><rect x="906.6" y="294.3" width="1.6" height="6.2" fill="#505050"/><rect x="909.5" y="287.0" width="1.6" height="6.2" fill="#505050"/><rect x="909.5" y="294.3" width="1.6" height="6.2" fill="#505050"/><rect x="912.4" y="287.0" width="1.6" height="6.2" fill="#505050"/><rect x="912.4" y="294.3" width="1.6" height="6.2" fill="#505050"/><rect x="915.3" y="287.0" width="1.6" height="6.2" fill="#505050"/><rect x="915.3" y="294.3" width="1.6" height="6.2" fill="#505050"/><rect x="918.2" y="287.0" width="1.6" height="6.2" fill="#505050"/><rect x="918.2" y="294.3" width="1.6" height="6.2" fill="#505050"/><rect x="921.1" y="287.0" width="1.6" height="6.2" fill="#505050"/><rect x="921.1" y="294.3" width="1.6" height="6.2" fill="#505050"/><rect x="880.5" y="306.0" width="1.6" height="5.8" fill="#505050"/><rect x="880.5" y="312.8" width="1.6" height="5.8" fill="#505050"/><rect x="883.4" y="306.0" width="1.6" height="5.8" fill="#505050"/><rect x="883.4" y="312.8" width="1.6" height="5.8" fill="#505050"/><rect x="886.3" y="306.0" width="1.6" height="5.8" fill="#505050"/><rect x="886.3" y="312.8" width="1.6" height="5.8" fill="#505050"/><rect x="889.2" y="306.0" width="1.6" height="5.8" fill="#505050"/><rect x="889.2" y="312.8" width="1.6" height="5.8" fill="#505050"/><rect x="892.1" y="306.0" width="1.6" height="5.8" fill="#505050"/><rect x="892.1" y="312.8" width="1.6" height="5.8" fill="#505050"/><rect x="895.0" y="306.0" width="1.6" height="5.8" fill="#505050"/><rect x="895.0" y="312.8" width="1.6" height="5.8" fill="#505050"/><rect x="897.9" y="306.0" width="1.6" height="5.8" fill="#505050"/><rect x="897.9" y="312.8" width="1.6" height="5.8" fill="#505050"/><rect x="900.8" y="306.0" width="1.6" height="5.8" fill="#505050"/><rect x="900.8" y="312.8" width="1.6" height="5.8" fill="#505050"/><rect x="903.7" y="306.0" width="1.6" height="5.8" fill="#505050"/><rect x="903.7" y="312.8" width="1.6" height="5.8" fill="#505050"/><rect x="906.6" y="306.0" width="1.6" height="5.8" fill="#505050"/><rect x="906.6" y="312.8" width="1.6" height="5.8" fill="#505050"/><rect x="909.5" y="306.0" width="1.6" height="5.8" fill="#505050"/><rect x="909.5" y="312.8" width="1.6" height="5.8" fill="#505050"/><rect x="912.4" y="306.0" width="1.6" height="5.8" fill="#505050"/><rect x="912.4" y="312.8" width="1.6" height="5.8" fill="#505050"/><rect x="915.3" y="306.0" width="1.6" height="5.8" fill="#505050"/><rect x="915.3" y="312.8" width="1.6" height="5.8" fill="#505050"/><rect x="918.2" y="306.0" width="1.6" height="5.8" fill="#505050"/><rect x="918.2" y="312.8" width="1.6" height="5.8" fill="#505050"/><rect x="921.1" y="306.0" width="1.6" height="5.8" fill="#505050"/><rect x="921.1" y="312.8" width="1.6" height="5.8" fill="#505050"/><rect x="849.2" y="925.3" width="1.6" height="6.1" fill="#505050"/><rect x="849.2" y="932.4" width="1.6" height="6.1" fill="#505050"/><rect x="852.1" y="925.3" width="1.6" height="6.1" fill="#505050"/><rect x="852.1" y="932.4" width="1.6" height="6.1" fill="#505050"/><rect x="855.0" y="925.3" width="1.6" height="6.1" fill="#505050"/><rect x="855.0" y="932.4" width="1.6" height="6.1" fill="#505050"/><rect x="857.9" y="925.3" width="1.6" height="6.1" fill="#505050"/><rect x="857.9" y="932.4" width="1.6" height="6.1" fill="#505050"/><rect x="860.8" y="925.3" width="1.6" height="6.1" fill="#505050"/><rect x="860.8" y="932.4" width="1.6" height="6.1" fill="#505050"/><rect x="863.7" y="925.3" width="1.6" height="6.1" fill="#505050"/><rect x="863.7" y="932.4" width="1.6" height="6.1" fill="#505050"/><rect x="866.6" y="925.3" width="1.6" height="6.1" fill="#505050"/><rect x="866.6" y="932.4" width="1.6" height="6.1" fill="#505050"/><rect x="869.5" y="925.3" width="1.6" height="6.1" fill="#505050"/><rect x="869.5" y="932.4" width="1.6" height="6.1" fill="#505050"/><rect x="872.4" y="925.3" width="1.6" height="6.1" fill="#505050"/><rect x="872.4" y="932.4" width="1.6" height="6.1" fill="#505050"/><rect x="875.3" y="925.3" width="1.6" height="6.1" fill="#505050"/><rect x="875.3" y="932.4" width="1.6" height="6.1" fill="#505050"/><rect x="878.2" y="925.3" width="1.6" height="6.1" fill="#505050"/><rect x="878.2" y="932.4" width="1.6" height="6.1" fill="#505050"/><rect x="881.1" y="925.3" width="1.6" height="6.1" fill="#505050"/><rect x="881.1" y="932.4" width="1.6" height="6.1" fill="#505050"/><rect x="849.2" y="944.2" width="1.6" height="6.1" fill="#505050"/><rect x="849.2" y="951.3" width="1.6" height="6.1" fill="#505050"/><rect x="852.1" y="944.2" width="1.6" height="6.1" fill="#505050"/><rect x="852.1" y="951.3" width="1.6" height="6.1" fill="#505050"/><rect x="855.0" y="944.2" width="1.6" height="6.1" fill="#505050"/><rect x="855.0" y="951.3" width="1.6" height="6.1" fill="#505050"/><rect x="857.9" y="944.2" width="1.6" height="6.1" fill="#505050"/><rect x="857.9" y="951.3" width="1.6" height="6.1" fill="#505050"/><rect x="860.8" y="944.2" width="1.6" height="6.1" fill="#505050"/><rect x="860.8" y="951.3" width="1.6" height="6.1" fill="#505050"/><rect x="863.7" y="944.2" width="1.6" height="6.1" fill="#505050"/><rect x="863.7" y="951.3" width="1.6" height="6.1" fill="#505050"/><rect x="866.6" y="944.2" width="1.6" height="6.1" fill="#505050"/><rect x="866.6" y="951.3" width="1.6" height="6.1" fill="#505050"/><rect x="869.5" y="944.2" width="1.6" height="6.1" fill="#505050"/><rect x="869.5" y="951.3" width="1.6" height="6.1" fill="#505050"/><rect x="872.4" y="944.2" width="1.6" height="6.1" fill="#505050"/><rect x="872.4" y="951.3" width="1.6" height="6.1" fill="#505050"/><rect x="875.3" y="944.2" width="1.6" height="6.1" fill="#505050"/><rect x="875.3" y="951.3" width="1.6" height="6.1" fill="#505050"/><rect x="878.2" y="944.2" width="1.6" height="6.1" fill="#505050"/><rect x="878.2" y="951.3" width="1.6" height="6.1" fill="#505050"/><rect x="881.1" y="944.2" width="1.6" height="6.1" fill="#505050"/><rect x="881.1" y="951.3" width="1.6" height="6.1" fill="#505050"/><rect x="750.3" y="441.5" width="6.7" height="55.2" fill="#6868ff"/><rect x="750.3" y="594.8" width="6.7" height="68.7" fill="#6868ff"/><rect x="750.3" y="909.0" width="6.7" height="19.5" fill="#6868ff"/><rect x="749.1" y="851.5" width="1.3" height="37.7" fill="#6a86c4"/><rect x="796.5" y="191.5" width="17.0" height="1.9" fill="#ffcb5e"/><rect x="1028.8" y="188.5" width="9.7" height="6.8" fill="#ffcb5e"/><rect x="1092.5" y="188.5" width="10.0" height="6.8" fill="#ffcb5e"/><rect x="1020.0" y="197.6" width="1.8" height="8.8" fill="#ffcb5e"/><rect x="1045.1" y="209.5" width="1.8" height="8.8" fill="#ffcb5e"/><rect x="1024.7" y="220.8" width="8.8" height="1.9" fill="#ffcb5e"/><rect x="1064.8" y="253.4" width="9.2" height="2.2" fill="#ffcb5e"/><rect x="1059.2" y="257.2" width="1.9" height="8.8" fill="#ffcb5e"/><rect x="998.0" y="291.9" width="2.2" height="9.7" fill="#ffcb5e"/><rect x="750.1" y="287.3" width="6.9" height="12.8" fill="#ffcb5e"/><rect x="750.1" y="305.7" width="6.9" height="12.6" fill="#ffcb5e"/><rect x="750.1" y="359.7" width="6.9" height="13.2" fill="#ffcb5e"/><rect x="750.1" y="502.0" width="6.9" height="12.5" fill="#ffcb5e"/><rect x="750.1" y="666.4" width="6.9" height="12.8" fill="#ffcb5e"/><rect x="879.1" y="358.4" width="2.1" height="13.2" fill="#ffcb5e"/><rect x="951.0" y="383.9" width="9.0" height="2.8" fill="#ffcb5e"/><rect x="966.6" y="383.9" width="9.1" height="2.8" fill="#ffcb5e"/><rect x="1096.9" y="310.8" width="10.0" height="2.1" fill="#ffcb5e"/><rect x="1092.5" y="314.5" width="1.8" height="8.8" fill="#ffcb5e"/><rect x="1092.5" y="362.8" width="1.8" height="8.2" fill="#ffcb5e"/><rect x="1119.7" y="376.0" width="17.3" height="1.9" fill="#ffcb5e"/><rect x="1139.3" y="376.0" width="17.2" height="1.9" fill="#ffcb5e"/><rect x="903.2" y="390.7" width="1.9" height="9.4" fill="#ffcb5e"/><rect x="903.2" y="446.5" width="1.9" height="8.8" fill="#ffcb5e"/><rect x="861.5" y="433.0" width="8.5" height="2.0" fill="#ffcb5e"/><rect x="829.2" y="472.3" width="1.8" height="8.7" fill="#ffcb5e"/><rect x="829.2" y="488.0" width="1.8" height="8.7" fill="#ffcb5e"/><rect x="767.0" y="467.2" width="8.8" height="2.2" fill="#ffcb5e"/><rect x="794.3" y="467.2" width="8.5" height="2.2" fill="#ffcb5e"/><rect x="815.1" y="467.2" width="9.7" height="2.2" fill="#ffcb5e"/><rect x="866.2" y="504.5" width="1.6" height="8.8" fill="#ffcb5e"/><rect x="808.0" y="529.6" width="2.0" height="8.1" fill="#ffcb5e"/><rect x="808.0" y="566.4" width="2.0" height="7.7" fill="#ffcb5e"/><rect x="808.0" y="598.2" width="2.0" height="8.8" fill="#ffcb5e"/><rect x="808.0" y="637.7" width="2.0" height="9.5" fill="#ffcb5e"/><rect x="829.2" y="523.3" width="1.4" height="8.8" fill="#ffcb5e"/><rect x="829.2" y="542.1" width="1.4" height="8.2" fill="#ffcb5e"/><rect x="829.2" y="566.6" width="1.4" height="8.2" fill="#ffcb5e"/><rect x="903.0" y="566.6" width="2.3" height="8.8" fill="#ffcb5e"/><rect x="850.5" y="580.6" width="1.9" height="8.8" fill="#ffcb5e"/><rect x="769.5" y="663.5" width="8.8" height="1.8" fill="#ffcb5e"/><rect x="854.9" y="663.7" width="8.8" height="1.6" fill="#ffcb5e"/><rect x="891.9" y="663.7" width="8.8" height="1.6" fill="#ffcb5e"/><rect x="903.2" y="667.9" width="1.9" height="10.0" fill="#ffcb5e"/><rect x="768.3" y="680.6" width="8.4" height="1.9" fill="#ffcb5e"/><rect x="831.0" y="680.6" width="8.8" height="1.9" fill="#ffcb5e"/><rect x="846.1" y="680.6" width="8.8" height="1.9" fill="#ffcb5e"/><rect x="870.6" y="680.6" width="8.8" height="1.9" fill="#ffcb5e"/><rect x="808.0" y="697.0" width="2.0" height="8.7" fill="#ffcb5e"/><rect x="808.0" y="725.8" width="2.0" height="8.8" fill="#ffcb5e"/><rect x="829.2" y="736.7" width="1.4" height="8.8" fill="#ffcb5e"/><rect x="813.1" y="748.4" width="13.5" height="2.5" fill="#ffcb5e"/><rect x="831.0" y="700.2" width="8.8" height="1.8" fill="#ffcb5e"/><rect x="846.1" y="700.2" width="8.8" height="1.8" fill="#ffcb5e"/><rect x="856.1" y="764.7" width="1.7" height="12.6" fill="#ffcb5e"/><rect x="856.1" y="785.7" width="1.7" height="8.5" fill="#ffcb5e"/><rect x="989.5" y="727.7" width="2.5" height="12.5" fill="#ffcb5e"/><rect x="992.9" y="748.4" width="13.0" height="2.5" fill="#ffcb5e"/><rect x="1035.4" y="748.4" width="18.5" height="2.5" fill="#ffcb5e"/><rect x="1064.5" y="748.4" width="12.9" height="2.5" fill="#ffcb5e"/><rect x="1166.9" y="727.7" width="6.8" height="18.2" fill="#ffcb5e"/><rect x="1166.9" y="759.1" width="6.8" height="32.8" fill="#ffcb5e"/><rect x="1166.9" y="813.9" width="6.8" height="33.3" fill="#ffcb5e"/><rect x="1166.9" y="852.8" width="6.8" height="33.0" fill="#ffcb5e"/><rect x="1166.9" y="908.4" width="6.8" height="33.3" fill="#ffcb5e"/><rect x="750.1" y="823.3" width="2.5" height="9.4" fill="#ffcb5e"/><rect x="1059.2" y="874.1" width="8.2" height="1.7" fill="#ffcb5e"/><rect x="1055.2" y="881.4" width="1.7" height="8.4" fill="#ffcb5e"/><rect x="750.3" y="933.3" width="6.3" height="10.9" fill="#ffcb5e"/><rect x="812.8" y="910.9" width="2.3" height="8.5" fill="#ffcb5e"/><rect x="873.1" y="901.5" width="2.7" height="13.2" fill="#ffcb5e"/><rect x="816.9" y="960.9" width="13.3" height="6.5" fill="#ffcb5e"/><rect x="835.2" y="960.9" width="13.4" height="6.5" fill="#ffcb5e"/><rect x="905.7" y="960.9" width="23.2" height="6.5" fill="#ffcb5e"/><rect x="933.3" y="960.9" width="23.3" height="6.5" fill="#ffcb5e"/><rect x="971.1" y="960.9" width="22.8" height="6.5" fill="#ffcb5e"/><rect x="998.7" y="960.9" width="22.8" height="6.5" fill="#ffcb5e"/><rect x="1037.2" y="960.9" width="11.3" height="6.5" fill="#ffcb5e"/><rect x="1171.2" y="415.8" width="2.8" height="12.5" fill="#ffcb5e"/><rect x="1171.2" y="661.0" width="2.8" height="12.9" fill="#ffcb5e"/><rect x="905.1" y="566.6" width="1.1" height="8.8" fill="#f03030"/><rect x="791.8" y="181.0" width="26.1" height="10.3" fill="#709f7e"/><rect x="739.0" y="287.3" width="11.1" height="12.8" fill="#709f7e"/><rect x="739.0" y="305.7" width="11.1" height="12.6" fill="#709f7e"/><rect x="739.0" y="359.7" width="11.1" height="13.2" fill="#709f7e"/><rect x="739.0" y="502.0" width="11.1" height="12.5" fill="#709f7e"/><rect x="739.0" y="666.4" width="11.1" height="12.8" fill="#709f7e"/><rect x="739.0" y="823.3" width="11.1" height="9.4" fill="#709f7e"/><rect x="816.9" y="967.6" width="13.3" height="9.8" fill="#709f7e"/><rect x="835.2" y="967.6" width="13.4" height="9.8" fill="#709f7e"/><rect x="1174.0" y="415.8" width="7.0" height="12.5" fill="#709f7e"/><rect x="1174.0" y="661.0" width="7.0" height="12.9" fill="#709f7e"/><path d="M791.8 185.2h26.100M816.900 974.500h13.300M835.200 974.500h13.400" stroke="#3a3a78" stroke-width="2.200" opacity=".75"/><rect x="776.4" y="400.7" width="43.7" height="19.5" fill="#a83939"/><rect x="837.3" y="400.7" width="41.1" height="19.5" fill="#a83939"/><rect x="945.6" y="414.5" width="33.3" height="22.0" fill="#ff0000"/><rect x="967.9" y="467.9" width="11.0" height="13.2" fill="#a83939"/><rect x="967.9" y="492.1" width="11.0" height="13.2" fill="#a83939"/><rect x="967.9" y="516.4" width="11.0" height="13.2" fill="#a83939"/><rect x="967.9" y="540.7" width="11.0" height="13.2" fill="#a83939"/><rect x="957.0" y="461.0" width="10.6" height="8.0" fill="#5a5a5a"/><rect x="957.0" y="552.2" width="10.6" height="8.3" fill="#5a5a5a"/><rect x="957.4" y="630.8" width="10.2" height="8.2" fill="#5a5a5a"/><rect x="957.5" y="709.5" width="10.1" height="8.8" fill="#5a5a5a"/><rect x="1055.2" y="460.3" width="6.5" height="8.8" fill="#5a5a5a"/><rect x="1090.3" y="460.3" width="4.0" height="8.8" fill="#5a5a5a"/><rect x="1055.2" y="552.2" width="6.5" height="8.8" fill="#5a5a5a"/><rect x="1090.3" y="552.2" width="4.0" height="8.8" fill="#5a5a5a"/><rect x="1055.2" y="630.8" width="6.5" height="8.2" fill="#5a5a5a"/><rect x="1090.3" y="630.8" width="4.0" height="8.2" fill="#5a5a5a"/><rect x="1056.1" y="709.2" width="5.4" height="9.1" fill="#5a5a5a"/><rect x="1090.3" y="709.2" width="4.0" height="9.1" fill="#5a5a5a"/><rect x="1015.2" y="441.8" width="5.5" height="4.9" fill="#4873ae"/><rect x="1023.5" y="441.8" width="5.5" height="4.9" fill="#4873ae"/><rect x="1015.2" y="448.4" width="13.7" height="8.4" fill="#6f8f2b"/><rect x="1015.2" y="458.4" width="5.5" height="4.9" fill="#4873ae"/><rect x="1023.5" y="458.4" width="5.5" height="4.9" fill="#4873ae"/><rect x="1015.2" y="465.1" width="5.5" height="4.9" fill="#4873ae"/><rect x="1023.5" y="465.1" width="5.5" height="4.9" fill="#4873ae"/><rect x="1015.2" y="471.4" width="13.7" height="8.4" fill="#6f8f2b"/><rect x="1015.2" y="481.6" width="5.5" height="4.9" fill="#4873ae"/><rect x="1023.5" y="481.6" width="5.5" height="4.9" fill="#4873ae"/><rect x="1015.2" y="488.2" width="5.5" height="4.9" fill="#4873ae"/><rect x="1023.5" y="488.2" width="5.5" height="4.9" fill="#4873ae"/><rect x="1015.2" y="494.4" width="13.7" height="8.4" fill="#6f8f2b"/><rect x="1015.2" y="504.5" width="5.5" height="4.9" fill="#4873ae"/><rect x="1023.5" y="504.5" width="5.5" height="4.9" fill="#4873ae"/><rect x="1041.8" y="441.8" width="5.5" height="4.9" fill="#4873ae"/><rect x="1050.1" y="441.8" width="5.5" height="4.9" fill="#4873ae"/><rect x="1041.8" y="448.4" width="13.7" height="8.4" fill="#6f8f2b"/><rect x="1041.8" y="458.4" width="5.5" height="4.9" fill="#4873ae"/><rect x="1050.1" y="458.4" width="5.5" height="4.9" fill="#4873ae"/><rect x="1041.8" y="465.1" width="5.5" height="4.9" fill="#4873ae"/><rect x="1050.1" y="465.1" width="5.5" height="4.9" fill="#4873ae"/><rect x="1041.8" y="471.4" width="13.7" height="8.4" fill="#6f8f2b"/><rect x="1041.8" y="481.6" width="5.5" height="4.9" fill="#4873ae"/><rect x="1050.1" y="481.6" width="5.5" height="4.9" fill="#4873ae"/><rect x="1041.8" y="488.2" width="5.5" height="4.9" fill="#4873ae"/><rect x="1050.1" y="488.2" width="5.5" height="4.9" fill="#4873ae"/><rect x="1041.8" y="494.4" width="13.7" height="8.4" fill="#6f8f2b"/><rect x="1041.8" y="504.5" width="5.5" height="4.9" fill="#4873ae"/><rect x="1050.1" y="504.5" width="5.5" height="4.9" fill="#4873ae"/><rect x="1068.2" y="441.8" width="5.5" height="4.9" fill="#4873ae"/><rect x="1076.5" y="441.8" width="5.5" height="4.9" fill="#4873ae"/><rect x="1068.2" y="448.4" width="13.7" height="8.4" fill="#6f8f2b"/><rect x="1068.2" y="458.4" width="5.5" height="4.9" fill="#4873ae"/><rect x="1076.5" y="458.4" width="5.5" height="4.9" fill="#4873ae"/><rect x="1068.2" y="465.1" width="5.5" height="4.9" fill="#4873ae"/><rect x="1076.5" y="465.1" width="5.5" height="4.9" fill="#4873ae"/><rect x="1068.2" y="471.4" width="13.7" height="8.4" fill="#6f8f2b"/><rect x="1068.2" y="481.6" width="5.5" height="4.9" fill="#4873ae"/><rect x="1076.5" y="481.6" width="5.5" height="4.9" fill="#4873ae"/><rect x="1068.2" y="488.2" width="5.5" height="4.9" fill="#4873ae"/><rect x="1076.5" y="488.2" width="5.5" height="4.9" fill="#4873ae"/><rect x="1068.2" y="494.4" width="13.7" height="8.4" fill="#6f8f2b"/><rect x="1068.2" y="504.5" width="5.5" height="4.9" fill="#4873ae"/><rect x="1076.5" y="504.5" width="5.5" height="4.9" fill="#4873ae"/><rect x="1094.6" y="441.8" width="5.5" height="4.9" fill="#4873ae"/><rect x="1102.9" y="441.8" width="5.5" height="4.9" fill="#4873ae"/><rect x="1094.6" y="448.4" width="13.7" height="8.4" fill="#6f8f2b"/><rect x="1094.6" y="458.4" width="5.5" height="4.9" fill="#4873ae"/><rect x="1102.9" y="458.4" width="5.5" height="4.9" fill="#4873ae"/><rect x="1094.6" y="465.1" width="5.5" height="4.9" fill="#4873ae"/><rect x="1102.9" y="465.1" width="5.5" height="4.9" fill="#4873ae"/><rect x="1094.6" y="471.4" width="13.7" height="8.4" fill="#6f8f2b"/><rect x="1094.6" y="481.6" width="5.5" height="4.9" fill="#4873ae"/><rect x="1102.9" y="481.6" width="5.5" height="4.9" fill="#4873ae"/><rect x="1094.6" y="488.2" width="5.5" height="4.9" fill="#4873ae"/><rect x="1102.9" y="488.2" width="5.5" height="4.9" fill="#4873ae"/><rect x="1094.6" y="494.4" width="13.7" height="8.4" fill="#6f8f2b"/><rect x="1094.6" y="504.5" width="5.5" height="4.9" fill="#4873ae"/><rect x="1102.9" y="504.5" width="5.5" height="4.9" fill="#4873ae"/><rect x="1122.2" y="441.8" width="5.5" height="4.9" fill="#4873ae"/><rect x="1130.5" y="441.8" width="5.5" height="4.9" fill="#4873ae"/><rect x="1122.2" y="448.4" width="13.7" height="8.4" fill="#6f8f2b"/><rect x="1122.2" y="458.4" width="5.5" height="4.9" fill="#4873ae"/><rect x="1130.5" y="458.4" width="5.5" height="4.9" fill="#4873ae"/><rect x="1122.2" y="465.1" width="5.5" height="4.9" fill="#4873ae"/><rect x="1130.5" y="465.1" width="5.5" height="4.9" fill="#4873ae"/><rect x="1122.2" y="471.4" width="13.7" height="8.4" fill="#6f8f2b"/><rect x="1122.2" y="481.6" width="5.5" height="4.9" fill="#4873ae"/><rect x="1130.5" y="481.6" width="5.5" height="4.9" fill="#4873ae"/><rect x="1122.2" y="488.2" width="5.5" height="4.9" fill="#4873ae"/><rect x="1130.5" y="488.2" width="5.5" height="4.9" fill="#4873ae"/><rect x="1122.2" y="494.4" width="13.7" height="8.4" fill="#6f8f2b"/><rect x="1122.2" y="504.5" width="5.5" height="4.9" fill="#4873ae"/><rect x="1130.5" y="504.5" width="5.5" height="4.9" fill="#4873ae"/><rect x="1148.6" y="441.8" width="5.5" height="4.9" fill="#4873ae"/><rect x="1156.9" y="441.8" width="5.5" height="4.9" fill="#4873ae"/><rect x="1148.6" y="448.4" width="13.7" height="8.4" fill="#6f8f2b"/><rect x="1148.6" y="458.4" width="5.5" height="4.9" fill="#4873ae"/><rect x="1156.9" y="458.4" width="5.5" height="4.9" fill="#4873ae"/><rect x="1148.6" y="465.1" width="5.5" height="4.9" fill="#4873ae"/><rect x="1156.9" y="465.1" width="5.5" height="4.9" fill="#4873ae"/><rect x="1148.6" y="471.4" width="13.7" height="8.4" fill="#6f8f2b"/><rect x="1148.6" y="481.6" width="5.5" height="4.9" fill="#4873ae"/><rect x="1156.9" y="481.6" width="5.5" height="4.9" fill="#4873ae"/><rect x="1148.6" y="488.2" width="5.5" height="4.9" fill="#4873ae"/><rect x="1156.9" y="488.2" width="5.5" height="4.9" fill="#4873ae"/><rect x="1148.6" y="494.4" width="13.7" height="8.4" fill="#6f8f2b"/><rect x="1148.6" y="504.5" width="5.5" height="4.9" fill="#4873ae"/><rect x="1156.9" y="504.5" width="5.5" height="4.9" fill="#4873ae"/><rect x="1015.2" y="527.1" width="5.5" height="4.9" fill="#4873ae"/><rect x="1023.5" y="527.1" width="5.5" height="4.9" fill="#4873ae"/><rect x="1015.2" y="533.7" width="13.7" height="8.4" fill="#6f8f2b"/><rect x="1015.2" y="543.8" width="5.5" height="4.9" fill="#4873ae"/><rect x="1023.5" y="543.8" width="5.5" height="4.9" fill="#4873ae"/><rect x="1015.2" y="550.5" width="5.5" height="4.9" fill="#4873ae"/><rect x="1023.5" y="550.5" width="5.5" height="4.9" fill="#4873ae"/><rect x="1015.2" y="557.2" width="13.7" height="8.4" fill="#6f8f2b"/><rect x="1015.2" y="567.0" width="5.5" height="4.9" fill="#4873ae"/><rect x="1023.5" y="567.0" width="5.5" height="4.9" fill="#4873ae"/><rect x="1041.8" y="527.1" width="5.5" height="4.9" fill="#4873ae"/><rect x="1050.1" y="527.1" width="5.5" height="4.9" fill="#4873ae"/><rect x="1041.8" y="533.7" width="13.7" height="8.4" fill="#6f8f2b"/><rect x="1041.8" y="543.8" width="5.5" height="4.9" fill="#4873ae"/><rect x="1050.1" y="543.8" width="5.5" height="4.9" fill="#4873ae"/><rect x="1041.8" y="550.5" width="5.5" height="4.9" fill="#4873ae"/><rect x="1050.1" y="550.5" width="5.5" height="4.9" fill="#4873ae"/><rect x="1041.8" y="557.2" width="13.7" height="8.4" fill="#6f8f2b"/><rect x="1041.8" y="567.0" width="5.5" height="4.9" fill="#4873ae"/><rect x="1050.1" y="567.0" width="5.5" height="4.9" fill="#4873ae"/><rect x="1068.2" y="527.1" width="5.5" height="4.9" fill="#4873ae"/><rect x="1076.5" y="527.1" width="5.5" height="4.9" fill="#4873ae"/><rect x="1068.2" y="533.7" width="13.7" height="8.4" fill="#6f8f2b"/><rect x="1068.2" y="543.8" width="5.5" height="4.9" fill="#4873ae"/><rect x="1076.5" y="543.8" width="5.5" height="4.9" fill="#4873ae"/><rect x="1068.2" y="550.5" width="5.5" height="4.9" fill="#4873ae"/><rect x="1076.5" y="550.5" width="5.5" height="4.9" fill="#4873ae"/><rect x="1068.2" y="557.2" width="13.7" height="8.4" fill="#6f8f2b"/><rect x="1068.2" y="567.0" width="5.5" height="4.9" fill="#4873ae"/><rect x="1076.5" y="567.0" width="5.5" height="4.9" fill="#4873ae"/><rect x="1094.6" y="527.1" width="5.5" height="4.9" fill="#4873ae"/><rect x="1102.9" y="527.1" width="5.5" height="4.9" fill="#4873ae"/><rect x="1094.6" y="533.7" width="13.7" height="8.4" fill="#6f8f2b"/><rect x="1094.6" y="543.8" width="5.5" height="4.9" fill="#4873ae"/><rect x="1102.9" y="543.8" width="5.5" height="4.9" fill="#4873ae"/><rect x="1094.6" y="550.5" width="5.5" height="4.9" fill="#4873ae"/><rect x="1102.9" y="550.5" width="5.5" height="4.9" fill="#4873ae"/><rect x="1094.6" y="557.2" width="13.7" height="8.4" fill="#6f8f2b"/><rect x="1094.6" y="567.0" width="5.5" height="4.9" fill="#4873ae"/><rect x="1102.9" y="567.0" width="5.5" height="4.9" fill="#4873ae"/><rect x="1122.2" y="527.1" width="5.5" height="4.9" fill="#4873ae"/><rect x="1130.5" y="527.1" width="5.5" height="4.9" fill="#4873ae"/><rect x="1122.2" y="533.7" width="13.7" height="8.4" fill="#6f8f2b"/><rect x="1122.2" y="543.8" width="5.5" height="4.9" fill="#4873ae"/><rect x="1130.5" y="543.8" width="5.5" height="4.9" fill="#4873ae"/><rect x="1122.2" y="550.5" width="5.5" height="4.9" fill="#4873ae"/><rect x="1130.5" y="550.5" width="5.5" height="4.9" fill="#4873ae"/><rect x="1122.2" y="557.2" width="13.7" height="8.4" fill="#6f8f2b"/><rect x="1122.2" y="567.0" width="5.5" height="4.9" fill="#4873ae"/><rect x="1130.5" y="567.0" width="5.5" height="4.9" fill="#4873ae"/><rect x="1148.6" y="527.1" width="5.5" height="4.9" fill="#4873ae"/><rect x="1156.9" y="527.1" width="5.5" height="4.9" fill="#4873ae"/><rect x="1148.6" y="533.7" width="13.7" height="8.4" fill="#6f8f2b"/><rect x="1148.6" y="543.8" width="5.5" height="4.9" fill="#4873ae"/><rect x="1156.9" y="543.8" width="5.5" height="4.9" fill="#4873ae"/><rect x="1148.6" y="550.5" width="5.5" height="4.9" fill="#4873ae"/><rect x="1156.9" y="550.5" width="5.5" height="4.9" fill="#4873ae"/><rect x="1148.6" y="557.2" width="13.7" height="8.4" fill="#6f8f2b"/><rect x="1148.6" y="567.0" width="5.5" height="4.9" fill="#4873ae"/><rect x="1156.9" y="567.0" width="5.5" height="4.9" fill="#4873ae"/><rect x="1015.2" y="588.2" width="5.5" height="4.9" fill="#4873ae"/><rect x="1023.5" y="588.2" width="5.5" height="4.9" fill="#4873ae"/><rect x="1015.2" y="594.4" width="13.7" height="8.4" fill="#6f8f2b"/><rect x="1015.2" y="604.5" width="5.5" height="4.9" fill="#4873ae"/><rect x="1023.5" y="604.5" width="5.5" height="4.9" fill="#4873ae"/><rect x="1015.2" y="611.1" width="5.5" height="4.9" fill="#4873ae"/><rect x="1023.5" y="611.1" width="5.5" height="4.9" fill="#4873ae"/><rect x="1015.2" y="617.7" width="13.7" height="8.4" fill="#6f8f2b"/><rect x="1015.2" y="627.7" width="5.5" height="4.9" fill="#4873ae"/><rect x="1023.5" y="627.7" width="5.5" height="4.9" fill="#4873ae"/><rect x="1015.2" y="634.3" width="5.5" height="4.9" fill="#4873ae"/><rect x="1023.5" y="634.3" width="5.5" height="4.9" fill="#4873ae"/><rect x="1015.2" y="640.9" width="13.7" height="8.4" fill="#6f8f2b"/><rect x="1015.2" y="650.9" width="5.5" height="4.9" fill="#4873ae"/><rect x="1023.5" y="650.9" width="5.5" height="4.9" fill="#4873ae"/><rect x="1041.8" y="588.2" width="5.5" height="4.9" fill="#4873ae"/><rect x="1050.1" y="588.2" width="5.5" height="4.9" fill="#4873ae"/><rect x="1041.8" y="594.4" width="13.7" height="8.4" fill="#6f8f2b"/><rect x="1041.8" y="604.5" width="5.5" height="4.9" fill="#4873ae"/><rect x="1050.1" y="604.5" width="5.5" height="4.9" fill="#4873ae"/><rect x="1041.8" y="611.1" width="5.5" height="4.9" fill="#4873ae"/><rect x="1050.1" y="611.1" width="5.5" height="4.9" fill="#4873ae"/><rect x="1041.8" y="617.7" width="13.7" height="8.4" fill="#6f8f2b"/><rect x="1041.8" y="627.7" width="5.5" height="4.9" fill="#4873ae"/><rect x="1050.1" y="627.7" width="5.5" height="4.9" fill="#4873ae"/><rect x="1041.8" y="634.3" width="5.5" height="4.9" fill="#4873ae"/><rect x="1050.1" y="634.3" width="5.5" height="4.9" fill="#4873ae"/><rect x="1041.8" y="640.9" width="13.7" height="8.4" fill="#6f8f2b"/><rect x="1041.8" y="650.9" width="5.5" height="4.9" fill="#4873ae"/><rect x="1050.1" y="650.9" width="5.5" height="4.9" fill="#4873ae"/><rect x="1068.2" y="588.2" width="5.5" height="4.9" fill="#4873ae"/><rect x="1076.5" y="588.2" width="5.5" height="4.9" fill="#4873ae"/><rect x="1068.2" y="594.4" width="13.7" height="8.4" fill="#6f8f2b"/><rect x="1068.2" y="604.5" width="5.5" height="4.9" fill="#4873ae"/><rect x="1076.5" y="604.5" width="5.5" height="4.9" fill="#4873ae"/><rect x="1068.2" y="611.1" width="5.5" height="4.9" fill="#4873ae"/><rect x="1076.5" y="611.1" width="5.5" height="4.9" fill="#4873ae"/><rect x="1068.2" y="617.7" width="13.7" height="8.4" fill="#6f8f2b"/><rect x="1068.2" y="627.7" width="5.5" height="4.9" fill="#4873ae"/><rect x="1076.5" y="627.7" width="5.5" height="4.9" fill="#4873ae"/><rect x="1068.2" y="634.3" width="5.5" height="4.9" fill="#4873ae"/><rect x="1076.5" y="634.3" width="5.5" height="4.9" fill="#4873ae"/><rect x="1068.2" y="640.9" width="13.7" height="8.4" fill="#6f8f2b"/><rect x="1068.2" y="650.9" width="5.5" height="4.9" fill="#4873ae"/><rect x="1076.5" y="650.9" width="5.5" height="4.9" fill="#4873ae"/><rect x="1094.6" y="588.2" width="5.5" height="4.9" fill="#4873ae"/><rect x="1102.9" y="588.2" width="5.5" height="4.9" fill="#4873ae"/><rect x="1094.6" y="594.4" width="13.7" height="8.4" fill="#6f8f2b"/><rect x="1094.6" y="604.5" width="5.5" height="4.9" fill="#4873ae"/><rect x="1102.9" y="604.5" width="5.5" height="4.9" fill="#4873ae"/><rect x="1094.6" y="611.1" width="5.5" height="4.9" fill="#4873ae"/><rect x="1102.9" y="611.1" width="5.5" height="4.9" fill="#4873ae"/><rect x="1094.6" y="617.7" width="13.7" height="8.4" fill="#6f8f2b"/><rect x="1094.6" y="627.7" width="5.5" height="4.9" fill="#4873ae"/><rect x="1102.9" y="627.7" width="5.5" height="4.9" fill="#4873ae"/><rect x="1094.6" y="634.3" width="5.5" height="4.9" fill="#4873ae"/><rect x="1102.9" y="634.3" width="5.5" height="4.9" fill="#4873ae"/><rect x="1094.6" y="640.9" width="13.7" height="8.4" fill="#6f8f2b"/><rect x="1094.6" y="650.9" width="5.5" height="4.9" fill="#4873ae"/><rect x="1102.9" y="650.9" width="5.5" height="4.9" fill="#4873ae"/><rect x="1122.2" y="588.2" width="5.5" height="4.9" fill="#4873ae"/><rect x="1130.5" y="588.2" width="5.5" height="4.9" fill="#4873ae"/><rect x="1122.2" y="594.4" width="13.7" height="8.4" fill="#6f8f2b"/><rect x="1122.2" y="604.5" width="5.5" height="4.9" fill="#4873ae"/><rect x="1130.5" y="604.5" width="5.5" height="4.9" fill="#4873ae"/><rect x="1122.2" y="611.1" width="5.5" height="4.9" fill="#4873ae"/><rect x="1130.5" y="611.1" width="5.5" height="4.9" fill="#4873ae"/><rect x="1122.2" y="617.7" width="13.7" height="8.4" fill="#6f8f2b"/><rect x="1122.2" y="627.7" width="5.5" height="4.9" fill="#4873ae"/><rect x="1130.5" y="627.7" width="5.5" height="4.9" fill="#4873ae"/><rect x="1122.2" y="634.3" width="5.5" height="4.9" fill="#4873ae"/><rect x="1130.5" y="634.3" width="5.5" height="4.9" fill="#4873ae"/><rect x="1122.2" y="640.9" width="13.7" height="8.4" fill="#6f8f2b"/><rect x="1122.2" y="650.9" width="5.5" height="4.9" fill="#4873ae"/><rect x="1130.5" y="650.9" width="5.5" height="4.9" fill="#4873ae"/><rect x="1148.6" y="588.2" width="5.5" height="4.9" fill="#4873ae"/><rect x="1156.9" y="588.2" width="5.5" height="4.9" fill="#4873ae"/><rect x="1148.6" y="594.4" width="13.7" height="8.4" fill="#6f8f2b"/><rect x="1148.6" y="604.5" width="5.5" height="4.9" fill="#4873ae"/><rect x="1156.9" y="604.5" width="5.5" height="4.9" fill="#4873ae"/><rect x="1148.6" y="611.1" width="5.5" height="4.9" fill="#4873ae"/><rect x="1156.9" y="611.1" width="5.5" height="4.9" fill="#4873ae"/><rect x="1148.6" y="617.7" width="13.7" height="8.4" fill="#6f8f2b"/><rect x="1148.6" y="627.7" width="5.5" height="4.9" fill="#4873ae"/><rect x="1156.9" y="627.7" width="5.5" height="4.9" fill="#4873ae"/><rect x="1148.6" y="634.3" width="5.5" height="4.9" fill="#4873ae"/><rect x="1156.9" y="634.3" width="5.5" height="4.9" fill="#4873ae"/><rect x="1148.6" y="640.9" width="13.7" height="8.4" fill="#6f8f2b"/><rect x="1148.6" y="650.9" width="5.5" height="4.9" fill="#4873ae"/><rect x="1156.9" y="650.9" width="5.5" height="4.9" fill="#4873ae"/><rect x="918.9" y="587.7" width="8.6" height="13.0" fill="#6f8f2b"/><rect x="929.0" y="588.1" width="4.9" height="4.9" fill="#4873ae"/><rect x="929.0" y="595.5" width="4.9" height="4.9" fill="#4873ae"/><rect x="936.1" y="588.1" width="4.9" height="4.9" fill="#4873ae"/><rect x="936.1" y="595.5" width="4.9" height="4.9" fill="#4873ae"/><rect x="942.8" y="587.7" width="8.6" height="13.0" fill="#6f8f2b"/><rect x="952.4" y="588.1" width="4.9" height="4.9" fill="#4873ae"/><rect x="952.4" y="595.5" width="4.9" height="4.9" fill="#4873ae"/><rect x="959.4" y="588.1" width="4.9" height="4.9" fill="#4873ae"/><rect x="959.4" y="595.5" width="4.9" height="4.9" fill="#4873ae"/><rect x="965.1" y="587.7" width="8.6" height="13.0" fill="#6f8f2b"/><rect x="975.1" y="588.1" width="4.9" height="4.9" fill="#4873ae"/><rect x="975.1" y="595.5" width="4.9" height="4.9" fill="#4873ae"/><rect x="918.9" y="640.0" width="8.6" height="13.0" fill="#6f8f2b"/><rect x="929.0" y="640.4" width="4.9" height="4.9" fill="#4873ae"/><rect x="929.0" y="647.8" width="4.9" height="4.9" fill="#4873ae"/><rect x="936.1" y="640.4" width="4.9" height="4.9" fill="#4873ae"/><rect x="936.1" y="647.8" width="4.9" height="4.9" fill="#4873ae"/><rect x="942.8" y="640.0" width="8.6" height="13.0" fill="#6f8f2b"/><rect x="952.4" y="640.4" width="4.9" height="4.9" fill="#4873ae"/><rect x="952.4" y="647.8" width="4.9" height="4.9" fill="#4873ae"/><rect x="959.4" y="640.4" width="4.9" height="4.9" fill="#4873ae"/><rect x="959.4" y="647.8" width="4.9" height="4.9" fill="#4873ae"/><rect x="965.1" y="640.0" width="8.6" height="13.0" fill="#6f8f2b"/><rect x="975.1" y="640.4" width="4.9" height="4.9" fill="#4873ae"/><rect x="975.1" y="647.8" width="4.9" height="4.9" fill="#4873ae"/><rect x="918.9" y="678.5" width="8.6" height="13.0" fill="#6f8f2b"/><rect x="929.0" y="678.9" width="4.9" height="4.9" fill="#4873ae"/><rect x="929.0" y="686.3" width="4.9" height="4.9" fill="#4873ae"/><rect x="936.1" y="678.9" width="4.9" height="4.9" fill="#4873ae"/><rect x="936.1" y="686.3" width="4.9" height="4.9" fill="#4873ae"/><rect x="942.8" y="678.5" width="8.6" height="13.0" fill="#6f8f2b"/><rect x="952.4" y="678.9" width="4.9" height="4.9" fill="#4873ae"/><rect x="952.4" y="686.3" width="4.9" height="4.9" fill="#4873ae"/><rect x="959.4" y="678.9" width="4.9" height="4.9" fill="#4873ae"/><rect x="959.4" y="686.3" width="4.9" height="4.9" fill="#4873ae"/><rect x="965.1" y="678.5" width="8.6" height="13.0" fill="#6f8f2b"/><rect x="975.1" y="678.9" width="4.9" height="4.9" fill="#4873ae"/><rect x="975.1" y="686.3" width="4.9" height="4.9" fill="#4873ae"/><rect x="935.9" y="617.9" width="4.9" height="4.9" fill="#4873ae"/><rect x="935.9" y="625.3" width="4.9" height="4.9" fill="#4873ae"/><rect x="942.8" y="617.5" width="8.6" height="13.0" fill="#6f8f2b"/><rect x="952.4" y="617.9" width="4.9" height="4.9" fill="#4873ae"/><rect x="952.4" y="625.3" width="4.9" height="4.9" fill="#4873ae"/><rect x="959.4" y="617.9" width="4.9" height="4.9" fill="#4873ae"/><rect x="959.4" y="625.3" width="4.9" height="4.9" fill="#4873ae"/><rect x="965.1" y="617.5" width="8.6" height="13.0" fill="#6f8f2b"/><rect x="975.1" y="617.9" width="4.9" height="4.9" fill="#4873ae"/><rect x="975.1" y="625.3" width="4.9" height="4.9" fill="#4873ae"/><rect x="1006.2" y="678.9" width="4.9" height="4.9" fill="#4873ae"/><rect x="1006.2" y="686.3" width="4.9" height="4.9" fill="#4873ae"/><rect x="1012.8" y="678.5" width="8.6" height="13.0" fill="#6f8f2b"/><rect x="1022.8" y="678.9" width="4.9" height="4.9" fill="#4873ae"/><rect x="1022.8" y="686.3" width="4.9" height="4.9" fill="#4873ae"/><rect x="1029.7" y="678.9" width="4.9" height="4.9" fill="#4873ae"/><rect x="1029.7" y="686.3" width="4.9" height="4.9" fill="#4873ae"/><rect x="1036.4" y="678.5" width="8.6" height="13.0" fill="#6f8f2b"/><rect x="1046.4" y="678.9" width="4.9" height="4.9" fill="#4873ae"/><rect x="1046.4" y="686.3" width="4.9" height="4.9" fill="#4873ae"/><rect x="1052.9" y="678.9" width="4.9" height="4.9" fill="#4873ae"/><rect x="1052.9" y="686.3" width="4.9" height="4.9" fill="#4873ae"/><rect x="1059.0" y="678.5" width="8.6" height="13.0" fill="#6f8f2b"/><rect x="1069.0" y="678.9" width="4.9" height="4.9" fill="#4873ae"/><rect x="1069.0" y="686.3" width="4.9" height="4.9" fill="#4873ae"/><rect x="1086.2" y="678.9" width="4.9" height="4.9" fill="#4873ae"/><rect x="1086.2" y="686.3" width="4.9" height="4.9" fill="#4873ae"/><rect x="1092.5" y="678.5" width="8.6" height="13.0" fill="#6f8f2b"/><rect x="1102.5" y="678.9" width="4.9" height="4.9" fill="#4873ae"/><rect x="1102.5" y="686.3" width="4.9" height="4.9" fill="#4873ae"/><rect x="1109.4" y="678.9" width="4.9" height="4.9" fill="#4873ae"/><rect x="1109.4" y="686.3" width="4.9" height="4.9" fill="#4873ae"/><rect x="1115.9" y="678.5" width="8.6" height="13.0" fill="#6f8f2b"/><rect x="1126.0" y="678.9" width="4.9" height="4.9" fill="#4873ae"/><rect x="1126.0" y="686.3" width="4.9" height="4.9" fill="#4873ae"/><rect x="1132.6" y="678.9" width="4.9" height="4.9" fill="#4873ae"/><rect x="1132.6" y="686.3" width="4.9" height="4.9" fill="#4873ae"/><rect x="1138.9" y="678.5" width="8.6" height="13.0" fill="#6f8f2b"/><rect x="1148.9" y="678.9" width="4.9" height="4.9" fill="#4873ae"/><rect x="1148.9" y="686.3" width="4.9" height="4.9" fill="#4873ae"/><rect x="918.9" y="704.5" width="8.6" height="13.0" fill="#6f8f2b"/><rect x="929.0" y="704.9" width="4.9" height="4.9" fill="#4873ae"/><rect x="929.0" y="712.3" width="4.9" height="4.9" fill="#4873ae"/><rect x="935.3" y="704.9" width="4.9" height="4.9" fill="#4873ae"/><rect x="935.3" y="712.3" width="4.9" height="4.9" fill="#4873ae"/><rect x="941.5" y="704.5" width="8.6" height="13.0" fill="#6f8f2b"/><rect x="951.5" y="704.9" width="4.9" height="4.9" fill="#4873ae"/><rect x="951.5" y="712.3" width="4.9" height="4.9" fill="#4873ae"/><rect x="968.6" y="704.9" width="4.9" height="4.9" fill="#4873ae"/><rect x="968.6" y="712.3" width="4.9" height="4.9" fill="#4873ae"/><rect x="974.1" y="704.5" width="8.6" height="13.0" fill="#6f8f2b"/><rect x="983.6" y="704.9" width="4.9" height="4.9" fill="#4873ae"/><rect x="983.6" y="712.3" width="4.9" height="4.9" fill="#4873ae"/><rect x="989.2" y="704.9" width="4.9" height="4.9" fill="#4873ae"/><rect x="989.2" y="712.3" width="4.9" height="4.9" fill="#4873ae"/><rect x="995.2" y="704.5" width="8.6" height="13.0" fill="#6f8f2b"/><rect x="1005.2" y="704.9" width="4.9" height="4.9" fill="#4873ae"/><rect x="1005.2" y="712.3" width="4.9" height="4.9" fill="#4873ae"/><rect x="1011.5" y="704.9" width="4.9" height="4.9" fill="#4873ae"/><rect x="1011.5" y="712.3" width="4.9" height="4.9" fill="#4873ae"/><rect x="1017.8" y="704.5" width="8.6" height="13.0" fill="#6f8f2b"/><rect x="1027.8" y="704.9" width="4.9" height="4.9" fill="#4873ae"/><rect x="1027.8" y="712.3" width="4.9" height="4.9" fill="#4873ae"/><rect x="1033.8" y="704.9" width="4.9" height="4.9" fill="#4873ae"/><rect x="1033.8" y="712.3" width="4.9" height="4.9" fill="#4873ae"/><rect x="1039.7" y="704.5" width="8.6" height="13.0" fill="#6f8f2b"/><rect x="1049.8" y="704.9" width="4.9" height="4.9" fill="#4873ae"/><rect x="1049.8" y="712.3" width="4.9" height="4.9" fill="#4873ae"/><rect x="1065.5" y="704.9" width="4.9" height="4.9" fill="#4873ae"/><rect x="1065.5" y="712.3" width="4.9" height="4.9" fill="#4873ae"/><rect x="1072.4" y="704.5" width="8.6" height="13.0" fill="#6f8f2b"/><rect x="1081.8" y="704.9" width="4.9" height="4.9" fill="#4873ae"/><rect x="1081.8" y="712.3" width="4.9" height="4.9" fill="#4873ae"/><rect x="1095.6" y="704.9" width="4.9" height="4.9" fill="#4873ae"/><rect x="1095.6" y="712.3" width="4.9" height="4.9" fill="#4873ae"/><rect x="1101.6" y="704.5" width="8.6" height="13.0" fill="#6f8f2b"/><rect x="1111.7" y="704.9" width="4.9" height="4.9" fill="#4873ae"/><rect x="1111.7" y="712.3" width="4.9" height="4.9" fill="#4873ae"/><rect x="1118.2" y="704.9" width="4.9" height="4.9" fill="#4873ae"/><rect x="1118.2" y="712.3" width="4.9" height="4.9" fill="#4873ae"/><rect x="1125.1" y="704.5" width="8.6" height="13.0" fill="#6f8f2b"/><rect x="1135.1" y="704.9" width="4.9" height="4.9" fill="#4873ae"/><rect x="1135.1" y="712.3" width="4.9" height="4.9" fill="#4873ae"/><rect x="1141.4" y="704.9" width="4.9" height="4.9" fill="#4873ae"/><rect x="1141.4" y="712.3" width="4.9" height="4.9" fill="#4873ae"/><rect x="1148.3" y="704.5" width="8.6" height="13.0" fill="#6f8f2b"/><ellipse cx="1010.1" cy="444.4" rx="2.300" ry="1.350" fill="#f4590a" transform="rotate(13 1010.1 444.4)"/><ellipse cx="1010.5" cy="451.9" rx="2.300" ry="1.350" fill="#f4590a" transform="rotate(91 1010.5 451.9)"/><ellipse cx="1010.6" cy="460.1" rx="2.300" ry="1.350" fill="#f4590a" transform="rotate(16 1010.6 460.1)"/><ellipse cx="1011.2" cy="466.9" rx="2.300" ry="1.350" fill="#f4590a" transform="rotate(40 1011.2 466.9)"/><ellipse cx="1011.4" cy="475.7" rx="2.300" ry="1.350" fill="#f4590a" transform="rotate(71 1011.4 475.7)"/><ellipse cx="1011.3" cy="490.3" rx="2.300" ry="1.350" fill="#f4590a" transform="rotate(26 1011.3 490.3)"/><ellipse cx="1010.4" cy="499.1" rx="2.300" ry="1.350" fill="#f4590a" transform="rotate(33 1010.4 499.1)"/><ellipse cx="1010.9" cy="506.7" rx="2.300" ry="1.350" fill="#f4590a" transform="rotate(99 1010.9 506.7)"/><ellipse cx="1017.0" cy="435.6" rx="2.300" ry="1.350" fill="#f4590a" transform="rotate(37 1017.0 435.6)"/><ellipse cx="1026.5" cy="436.2" rx="2.300" ry="1.350" fill="#f4590a" transform="rotate(57 1026.5 436.2)"/><ellipse cx="1017.8" cy="514.7" rx="2.300" ry="1.350" fill="#f4590a" transform="rotate(54 1017.8 514.7)"/><ellipse cx="1026.7" cy="515.1" rx="2.300" ry="1.350" fill="#f4590a" transform="rotate(44 1026.7 515.1)"/><ellipse cx="1037.3" cy="444.8" rx="2.300" ry="1.350" fill="#f4590a" transform="rotate(131 1037.3 444.8)"/><ellipse cx="1038.1" cy="452.0" rx="2.300" ry="1.350" fill="#f4590a" transform="rotate(75 1038.1 452.0)"/><ellipse cx="1036.7" cy="460.8" rx="2.300" ry="1.350" fill="#f4590a" transform="rotate(7 1036.7 460.8)"/><ellipse cx="1037.7" cy="467.6" rx="2.300" ry="1.350" fill="#f4590a" transform="rotate(158 1037.7 467.6)"/><ellipse cx="1037.6" cy="475.8" rx="2.300" ry="1.350" fill="#f4590a" transform="rotate(104 1037.6 475.8)"/><ellipse cx="1037.8" cy="484.7" rx="2.300" ry="1.350" fill="#f4590a" transform="rotate(85 1037.8 484.7)"/><ellipse cx="1036.6" cy="490.9" rx="2.300" ry="1.350" fill="#f4590a" transform="rotate(116 1036.6 490.9)"/><ellipse cx="1037.0" cy="506.7" rx="2.300" ry="1.350" fill="#f4590a" transform="rotate(120 1037.0 506.7)"/><ellipse cx="1043.5" cy="436.2" rx="2.300" ry="1.350" fill="#f4590a" transform="rotate(30 1043.5 436.2)"/><ellipse cx="1052.2" cy="435.6" rx="2.300" ry="1.350" fill="#f4590a" transform="rotate(138 1052.2 435.6)"/><ellipse cx="1043.7" cy="514.4" rx="2.300" ry="1.350" fill="#f4590a" transform="rotate(70 1043.7 514.4)"/><ellipse cx="1053.4" cy="514.1" rx="2.300" ry="1.350" fill="#f4590a" transform="rotate(81 1053.4 514.1)"/><ellipse cx="1064.3" cy="444.7" rx="2.300" ry="1.350" fill="#f4590a" transform="rotate(156 1064.3 444.7)"/><ellipse cx="1063.6" cy="452.4" rx="2.300" ry="1.350" fill="#f4590a" transform="rotate(159 1063.6 452.4)"/><ellipse cx="1063.2" cy="467.1" rx="2.300" ry="1.350" fill="#f4590a" transform="rotate(42 1063.2 467.1)"/><ellipse cx="1063.8" cy="475.2" rx="2.300" ry="1.350" fill="#f4590a" transform="rotate(1 1063.8 475.2)"/><ellipse cx="1063.5" cy="484.1" rx="2.300" ry="1.350" fill="#f4590a" transform="rotate(172 1063.5 484.1)"/><ellipse cx="1063.7" cy="490.8" rx="2.300" ry="1.350" fill="#f4590a" transform="rotate(122 1063.7 490.8)"/><ellipse cx="1064.3" cy="499.0" rx="2.300" ry="1.350" fill="#f4590a" transform="rotate(157 1064.3 499.0)"/><ellipse cx="1063.5" cy="506.7" rx="2.300" ry="1.350" fill="#f4590a" transform="rotate(19 1063.5 506.7)"/><ellipse cx="1070.9" cy="435.6" rx="2.300" ry="1.350" fill="#f4590a" transform="rotate(12 1070.9 435.6)"/><ellipse cx="1078.7" cy="435.8" rx="2.300" ry="1.350" fill="#f4590a" transform="rotate(61 1078.7 435.8)"/><ellipse cx="1070.0" cy="514.0" rx="2.300" ry="1.350" fill="#f4590a" transform="rotate(27 1070.0 514.0)"/><ellipse cx="1078.6" cy="514.6" rx="2.300" ry="1.350" fill="#f4590a" transform="rotate(5 1078.6 514.6)"/><ellipse cx="1090.3" cy="443.6" rx="2.300" ry="1.350" fill="#f4590a" transform="rotate(45 1090.3 443.6)"/><ellipse cx="1089.9" cy="452.0" rx="2.300" ry="1.350" fill="#f4590a" transform="rotate(153 1089.9 452.0)"/><ellipse cx="1090.1" cy="466.8" rx="2.300" ry="1.350" fill="#f4590a" transform="rotate(18 1090.1 466.8)"/><ellipse cx="1089.7" cy="476.1" rx="2.300" ry="1.350" fill="#f4590a" transform="rotate(29 1089.7 476.1)"/><ellipse cx="1090.8" cy="484.0" rx="2.300" ry="1.350" fill="#f4590a" transform="rotate(26 1090.8 484.0)"/><ellipse cx="1089.3" cy="490.6" rx="2.300" ry="1.350" fill="#f4590a" transform="rotate(176 1089.3 490.6)"/><ellipse cx="1090.4" cy="498.2" rx="2.300" ry="1.350" fill="#f4590a" transform="rotate(66 1090.4 498.2)"/><ellipse cx="1090.5" cy="507.0" rx="2.300" ry="1.350" fill="#f4590a" transform="rotate(140 1090.5 507.0)"/><ellipse cx="1096.8" cy="514.4" rx="2.300" ry="1.350" fill="#f4590a" transform="rotate(146 1096.8 514.4)"/><ellipse cx="1106.4" cy="515.4" rx="2.300" ry="1.350" fill="#f4590a" transform="rotate(145 1106.4 515.4)"/><ellipse cx="1118.1" cy="443.8" rx="2.300" ry="1.350" fill="#f4590a" transform="rotate(93 1118.1 443.8)"/><ellipse cx="1116.9" cy="451.8" rx="2.300" ry="1.350" fill="#f4590a" transform="rotate(50 1116.9 451.8)"/><ellipse cx="1118.0" cy="461.5" rx="2.300" ry="1.350" fill="#f4590a" transform="rotate(81 1118.0 461.5)"/><ellipse cx="1117.3" cy="490.2" rx="2.300" ry="1.350" fill="#f4590a" transform="rotate(35 1117.3 490.2)"/><ellipse cx="1117.9" cy="499.2" rx="2.300" ry="1.350" fill="#f4590a" transform="rotate(151 1117.9 499.2)"/><ellipse cx="1117.9" cy="507.4" rx="2.300" ry="1.350" fill="#f4590a" transform="rotate(15 1117.9 507.4)"/><ellipse cx="1125.0" cy="437.0" rx="2.300" ry="1.350" fill="#f4590a" transform="rotate(141 1125.0 437.0)"/><ellipse cx="1133.6" cy="436.3" rx="2.300" ry="1.350" fill="#f4590a" transform="rotate(32 1133.6 436.3)"/><ellipse cx="1125.2" cy="514.5" rx="2.300" ry="1.350" fill="#f4590a" transform="rotate(144 1125.2 514.5)"/><ellipse cx="1134.0" cy="514.6" rx="2.300" ry="1.350" fill="#f4590a" transform="rotate(72 1134.0 514.6)"/><ellipse cx="1143.6" cy="452.0" rx="2.300" ry="1.350" fill="#f4590a" transform="rotate(27 1143.6 452.0)"/><ellipse cx="1144.6" cy="460.2" rx="2.300" ry="1.350" fill="#f4590a" transform="rotate(149 1144.6 460.2)"/><ellipse cx="1143.9" cy="475.7" rx="2.300" ry="1.350" fill="#f4590a" transform="rotate(24 1143.9 475.7)"/><ellipse cx="1144.9" cy="484.2" rx="2.300" ry="1.350" fill="#f4590a" transform="rotate(95 1144.9 484.2)"/><ellipse cx="1144.7" cy="499.1" rx="2.300" ry="1.350" fill="#f4590a" transform="rotate(38 1144.7 499.1)"/><ellipse cx="1143.8" cy="506.5" rx="2.300" ry="1.350" fill="#f4590a" transform="rotate(106 1143.8 506.5)"/><ellipse cx="1150.7" cy="514.7" rx="2.300" ry="1.350" fill="#f4590a" transform="rotate(24 1150.7 514.7)"/><ellipse cx="1160.3" cy="514.6" rx="2.300" ry="1.350" fill="#f4590a" transform="rotate(82 1160.3 514.6)"/><ellipse cx="1011.3" cy="529.4" rx="2.300" ry="1.350" fill="#f4590a" transform="rotate(165 1011.3 529.4)"/><ellipse cx="1010.8" cy="537.9" rx="2.300" ry="1.350" fill="#f4590a" transform="rotate(3 1010.8 537.9)"/><ellipse cx="1010.2" cy="545.4" rx="2.300" ry="1.350" fill="#f4590a" transform="rotate(144 1010.2 545.4)"/><ellipse cx="1010.7" cy="553.3" rx="2.300" ry="1.350" fill="#f4590a" transform="rotate(100 1010.7 553.3)"/><ellipse cx="1010.7" cy="561.5" rx="2.300" ry="1.350" fill="#f4590a" transform="rotate(141 1010.7 561.5)"/><ellipse cx="1010.8" cy="569.0" rx="2.300" ry="1.350" fill="#f4590a" transform="rotate(50 1010.8 569.0)"/><ellipse cx="1018.1" cy="521.6" rx="2.300" ry="1.350" fill="#f4590a" transform="rotate(101 1018.1 521.6)"/><ellipse cx="1026.6" cy="522.3" rx="2.300" ry="1.350" fill="#f4590a" transform="rotate(80 1026.6 522.3)"/><ellipse cx="1017.9" cy="577.3" rx="2.300" ry="1.350" fill="#f4590a" transform="rotate(92 1017.9 577.3)"/><ellipse cx="1026.5" cy="577.2" rx="2.300" ry="1.350" fill="#f4590a" transform="rotate(96 1026.5 577.2)"/><ellipse cx="1038.0" cy="529.8" rx="2.300" ry="1.350" fill="#f4590a" transform="rotate(158 1038.0 529.8)"/><ellipse cx="1037.4" cy="546.9" rx="2.300" ry="1.350" fill="#f4590a" transform="rotate(151 1037.4 546.9)"/><ellipse cx="1036.7" cy="552.8" rx="2.300" ry="1.350" fill="#f4590a" transform="rotate(13 1036.7 552.8)"/><ellipse cx="1036.6" cy="561.7" rx="2.300" ry="1.350" fill="#f4590a" transform="rotate(141 1036.6 561.7)"/><ellipse cx="1036.7" cy="569.7" rx="2.300" ry="1.350" fill="#f4590a" transform="rotate(119 1036.7 569.7)"/><ellipse cx="1043.7" cy="522.2" rx="2.300" ry="1.350" fill="#f4590a" transform="rotate(174 1043.7 522.2)"/><ellipse cx="1052.4" cy="522.3" rx="2.300" ry="1.350" fill="#f4590a" transform="rotate(72 1052.4 522.3)"/><ellipse cx="1044.3" cy="578.1" rx="2.300" ry="1.350" fill="#f4590a" transform="rotate(150 1044.3 578.1)"/><ellipse cx="1052.3" cy="577.2" rx="2.300" ry="1.350" fill="#f4590a" transform="rotate(93 1052.3 577.2)"/><ellipse cx="1063.2" cy="529.2" rx="2.300" ry="1.350" fill="#f4590a" transform="rotate(130 1063.2 529.2)"/><ellipse cx="1063.8" cy="537.8" rx="2.300" ry="1.350" fill="#f4590a" transform="rotate(3 1063.8 537.8)"/><ellipse cx="1063.9" cy="546.2" rx="2.300" ry="1.350" fill="#f4590a" transform="rotate(12 1063.9 546.2)"/><ellipse cx="1064.5" cy="560.8" rx="2.300" ry="1.350" fill="#f4590a" transform="rotate(48 1064.5 560.8)"/><ellipse cx="1064.1" cy="569.0" rx="2.300" ry="1.350" fill="#f4590a" transform="rotate(23 1064.1 569.0)"/><ellipse cx="1070.6" cy="522.3" rx="2.300" ry="1.350" fill="#f4590a" transform="rotate(147 1070.6 522.3)"/><ellipse cx="1078.8" cy="521.0" rx="2.300" ry="1.350" fill="#f4590a" transform="rotate(165 1078.8 521.0)"/><ellipse cx="1070.8" cy="577.6" rx="2.300" ry="1.350" fill="#f4590a" transform="rotate(16 1070.8 577.6)"/><ellipse cx="1078.5" cy="577.6" rx="2.300" ry="1.350" fill="#f4590a" transform="rotate(77 1078.5 577.6)"/><ellipse cx="1090.8" cy="529.7" rx="2.300" ry="1.350" fill="#f4590a" transform="rotate(144 1090.8 529.7)"/><ellipse cx="1090.7" cy="537.2" rx="2.300" ry="1.350" fill="#f4590a" transform="rotate(155 1090.7 537.2)"/><ellipse cx="1089.8" cy="546.3" rx="2.300" ry="1.350" fill="#f4590a" transform="rotate(167 1089.8 546.3)"/><ellipse cx="1089.5" cy="552.9" rx="2.300" ry="1.350" fill="#f4590a" transform="rotate(43 1089.5 552.9)"/><ellipse cx="1089.6" cy="560.7" rx="2.300" ry="1.350" fill="#f4590a" transform="rotate(36 1089.6 560.7)"/><ellipse cx="1089.8" cy="569.8" rx="2.300" ry="1.350" fill="#f4590a" transform="rotate(52 1089.8 569.8)"/><ellipse cx="1097.1" cy="521.1" rx="2.300" ry="1.350" fill="#f4590a" transform="rotate(62 1097.1 521.1)"/><ellipse cx="1104.8" cy="521.2" rx="2.300" ry="1.350" fill="#f4590a" transform="rotate(3 1104.8 521.2)"/><ellipse cx="1097.5" cy="577.4" rx="2.300" ry="1.350" fill="#f4590a" transform="rotate(34 1097.5 577.4)"/><ellipse cx="1105.6" cy="578.0" rx="2.300" ry="1.350" fill="#f4590a" transform="rotate(19 1105.6 578.0)"/><ellipse cx="1117.6" cy="529.5" rx="2.300" ry="1.350" fill="#f4590a" transform="rotate(150 1117.6 529.5)"/><ellipse cx="1117.7" cy="538.2" rx="2.300" ry="1.350" fill="#f4590a" transform="rotate(177 1117.7 538.2)"/><ellipse cx="1118.2" cy="546.5" rx="2.300" ry="1.350" fill="#f4590a" transform="rotate(114 1118.2 546.5)"/><ellipse cx="1117.5" cy="552.2" rx="2.300" ry="1.350" fill="#f4590a" transform="rotate(23 1117.5 552.2)"/><ellipse cx="1118.1" cy="561.0" rx="2.300" ry="1.350" fill="#f4590a" transform="rotate(29 1118.1 561.0)"/><ellipse cx="1118.2" cy="570.0" rx="2.300" ry="1.350" fill="#f4590a" transform="rotate(121 1118.2 570.0)"/><ellipse cx="1124.4" cy="521.2" rx="2.300" ry="1.350" fill="#f4590a" transform="rotate(53 1124.4 521.2)"/><ellipse cx="1133.1" cy="521.1" rx="2.300" ry="1.350" fill="#f4590a" transform="rotate(80 1133.1 521.1)"/><ellipse cx="1124.3" cy="578.0" rx="2.300" ry="1.350" fill="#f4590a" transform="rotate(175 1124.3 578.0)"/><ellipse cx="1133.3" cy="576.9" rx="2.300" ry="1.350" fill="#f4590a" transform="rotate(174 1133.3 576.9)"/><ellipse cx="1143.9" cy="528.7" rx="2.300" ry="1.350" fill="#f4590a" transform="rotate(69 1143.9 528.7)"/><ellipse cx="1144.1" cy="537.4" rx="2.300" ry="1.350" fill="#f4590a" transform="rotate(91 1144.1 537.4)"/><ellipse cx="1143.7" cy="545.5" rx="2.300" ry="1.350" fill="#f4590a" transform="rotate(72 1143.7 545.5)"/><ellipse cx="1143.3" cy="552.6" rx="2.300" ry="1.350" fill="#f4590a" transform="rotate(42 1143.3 552.6)"/><ellipse cx="1144.1" cy="561.8" rx="2.300" ry="1.350" fill="#f4590a" transform="rotate(118 1144.1 561.8)"/><ellipse cx="1144.7" cy="569.2" rx="2.300" ry="1.350" fill="#f4590a" transform="rotate(59 1144.7 569.2)"/><ellipse cx="1151.9" cy="521.0" rx="2.300" ry="1.350" fill="#f4590a" transform="rotate(130 1151.9 521.0)"/><ellipse cx="1159.8" cy="520.9" rx="2.300" ry="1.350" fill="#f4590a" transform="rotate(150 1159.8 520.9)"/><ellipse cx="1151.7" cy="577.5" rx="2.300" ry="1.350" fill="#f4590a" transform="rotate(132 1151.7 577.5)"/><ellipse cx="1160.1" cy="576.7" rx="2.300" ry="1.350" fill="#f4590a" transform="rotate(94 1160.1 576.7)"/><ellipse cx="1011.2" cy="591.1" rx="2.300" ry="1.350" fill="#f4590a" transform="rotate(149 1011.2 591.1)"/><ellipse cx="1011.3" cy="598.9" rx="2.300" ry="1.350" fill="#f4590a" transform="rotate(125 1011.3 598.9)"/><ellipse cx="1009.9" cy="606.3" rx="2.300" ry="1.350" fill="#f4590a" transform="rotate(65 1009.9 606.3)"/><ellipse cx="1011.2" cy="613.6" rx="2.300" ry="1.350" fill="#f4590a" transform="rotate(113 1011.2 613.6)"/><ellipse cx="1011.0" cy="621.9" rx="2.300" ry="1.350" fill="#f4590a" transform="rotate(1 1011.0 621.9)"/><ellipse cx="1011.1" cy="630.1" rx="2.300" ry="1.350" fill="#f4590a" transform="rotate(96 1011.1 630.1)"/><ellipse cx="1010.0" cy="637.1" rx="2.300" ry="1.350" fill="#f4590a" transform="rotate(45 1010.0 637.1)"/><ellipse cx="1010.3" cy="645.5" rx="2.300" ry="1.350" fill="#f4590a" transform="rotate(37 1010.3 645.5)"/><ellipse cx="1011.5" cy="653.3" rx="2.300" ry="1.350" fill="#f4590a" transform="rotate(69 1011.5 653.3)"/><ellipse cx="1017.7" cy="583.0" rx="2.300" ry="1.350" fill="#f4590a" transform="rotate(138 1017.7 583.0)"/><ellipse cx="1026.4" cy="582.9" rx="2.300" ry="1.350" fill="#f4590a" transform="rotate(14 1026.4 582.9)"/><ellipse cx="1017.1" cy="660.8" rx="2.300" ry="1.350" fill="#f4590a" transform="rotate(134 1017.1 660.8)"/><ellipse cx="1025.9" cy="661.3" rx="2.300" ry="1.350" fill="#f4590a" transform="rotate(2 1025.9 661.3)"/><ellipse cx="1036.9" cy="590.9" rx="2.300" ry="1.350" fill="#f4590a" transform="rotate(125 1036.9 590.9)"/><ellipse cx="1037.0" cy="598.6" rx="2.300" ry="1.350" fill="#f4590a" transform="rotate(84 1037.0 598.6)"/><ellipse cx="1036.7" cy="607.5" rx="2.300" ry="1.350" fill="#f4590a" transform="rotate(36 1036.7 607.5)"/><ellipse cx="1037.2" cy="630.6" rx="2.300" ry="1.350" fill="#f4590a" transform="rotate(174 1037.2 630.6)"/><ellipse cx="1036.9" cy="636.2" rx="2.300" ry="1.350" fill="#f4590a" transform="rotate(170 1036.9 636.2)"/><ellipse cx="1037.4" cy="644.5" rx="2.300" ry="1.350" fill="#f4590a" transform="rotate(94 1037.4 644.5)"/><ellipse cx="1043.7" cy="583.2" rx="2.300" ry="1.350" fill="#f4590a" transform="rotate(92 1043.7 583.2)"/><ellipse cx="1053.4" cy="583.0" rx="2.300" ry="1.350" fill="#f4590a" transform="rotate(42 1053.4 583.0)"/><ellipse cx="1044.9" cy="661.2" rx="2.300" ry="1.350" fill="#f4590a" transform="rotate(4 1044.9 661.2)"/><ellipse cx="1052.0" cy="661.2" rx="2.300" ry="1.350" fill="#f4590a" transform="rotate(81 1052.0 661.2)"/><ellipse cx="1063.1" cy="590.4" rx="2.300" ry="1.350" fill="#f4590a" transform="rotate(57 1063.1 590.4)"/><ellipse cx="1062.9" cy="599.0" rx="2.300" ry="1.350" fill="#f4590a" transform="rotate(151 1062.9 599.0)"/><ellipse cx="1064.4" cy="607.2" rx="2.300" ry="1.350" fill="#f4590a" transform="rotate(162 1064.4 607.2)"/><ellipse cx="1063.5" cy="613.3" rx="2.300" ry="1.350" fill="#f4590a" transform="rotate(180 1063.5 613.3)"/><ellipse cx="1063.5" cy="621.8" rx="2.300" ry="1.350" fill="#f4590a" transform="rotate(50 1063.5 621.8)"/><ellipse cx="1063.1" cy="630.6" rx="2.300" ry="1.350" fill="#f4590a" transform="rotate(51 1063.1 630.6)"/><ellipse cx="1063.3" cy="645.1" rx="2.300" ry="1.350" fill="#f4590a" transform="rotate(34 1063.3 645.1)"/><ellipse cx="1064.4" cy="653.9" rx="2.300" ry="1.350" fill="#f4590a" transform="rotate(146 1064.4 653.9)"/><ellipse cx="1070.9" cy="583.4" rx="2.300" ry="1.350" fill="#f4590a" transform="rotate(169 1070.9 583.4)"/><ellipse cx="1079.3" cy="583.1" rx="2.300" ry="1.350" fill="#f4590a" transform="rotate(9 1079.3 583.1)"/><ellipse cx="1071.1" cy="661.1" rx="2.300" ry="1.350" fill="#f4590a" transform="rotate(135 1071.1 661.1)"/><ellipse cx="1079.4" cy="660.9" rx="2.300" ry="1.350" fill="#f4590a" transform="rotate(9 1079.4 660.9)"/><ellipse cx="1089.5" cy="590.6" rx="2.300" ry="1.350" fill="#f4590a" transform="rotate(62 1089.5 590.6)"/><ellipse cx="1090.5" cy="599.4" rx="2.300" ry="1.350" fill="#f4590a" transform="rotate(47 1090.5 599.4)"/><ellipse cx="1089.8" cy="607.0" rx="2.300" ry="1.350" fill="#f4590a" transform="rotate(71 1089.8 607.0)"/><ellipse cx="1089.6" cy="613.0" rx="2.300" ry="1.350" fill="#f4590a" transform="rotate(163 1089.6 613.0)"/><ellipse cx="1089.7" cy="622.6" rx="2.300" ry="1.350" fill="#f4590a" transform="rotate(179 1089.7 622.6)"/><ellipse cx="1089.5" cy="629.6" rx="2.300" ry="1.350" fill="#f4590a" transform="rotate(16 1089.5 629.6)"/><ellipse cx="1089.4" cy="636.3" rx="2.300" ry="1.350" fill="#f4590a" transform="rotate(47 1089.4 636.3)"/><ellipse cx="1090.7" cy="645.5" rx="2.300" ry="1.350" fill="#f4590a" transform="rotate(74 1090.7 645.5)"/><ellipse cx="1090.1" cy="653.1" rx="2.300" ry="1.350" fill="#f4590a" transform="rotate(61 1090.1 653.1)"/><ellipse cx="1096.4" cy="582.3" rx="2.300" ry="1.350" fill="#f4590a" transform="rotate(174 1096.4 582.3)"/><ellipse cx="1105.0" cy="582.7" rx="2.300" ry="1.350" fill="#f4590a" transform="rotate(113 1105.0 582.7)"/><ellipse cx="1097.7" cy="660.7" rx="2.300" ry="1.350" fill="#f4590a" transform="rotate(49 1097.7 660.7)"/><ellipse cx="1105.2" cy="661.0" rx="2.300" ry="1.350" fill="#f4590a" transform="rotate(80 1105.2 661.0)"/><ellipse cx="1118.3" cy="597.8" rx="2.300" ry="1.350" fill="#f4590a" transform="rotate(6 1118.3 597.8)"/><ellipse cx="1118.3" cy="606.9" rx="2.300" ry="1.350" fill="#f4590a" transform="rotate(106 1118.3 606.9)"/><ellipse cx="1117.5" cy="614.2" rx="2.300" ry="1.350" fill="#f4590a" transform="rotate(149 1117.5 614.2)"/><ellipse cx="1118.5" cy="621.5" rx="2.300" ry="1.350" fill="#f4590a" transform="rotate(20 1118.5 621.5)"/><ellipse cx="1117.7" cy="630.4" rx="2.300" ry="1.350" fill="#f4590a" transform="rotate(169 1117.7 630.4)"/><ellipse cx="1117.9" cy="637.1" rx="2.300" ry="1.350" fill="#f4590a" transform="rotate(82 1117.9 637.1)"/><ellipse cx="1117.0" cy="645.6" rx="2.300" ry="1.350" fill="#f4590a" transform="rotate(42 1117.0 645.6)"/><ellipse cx="1117.9" cy="653.0" rx="2.300" ry="1.350" fill="#f4590a" transform="rotate(23 1117.9 653.0)"/><ellipse cx="1124.3" cy="582.9" rx="2.300" ry="1.350" fill="#f4590a" transform="rotate(126 1124.3 582.9)"/><ellipse cx="1132.6" cy="582.0" rx="2.300" ry="1.350" fill="#f4590a" transform="rotate(94 1132.6 582.0)"/><ellipse cx="1124.8" cy="661.0" rx="2.300" ry="1.350" fill="#f4590a" transform="rotate(40 1124.8 661.0)"/><ellipse cx="1133.4" cy="660.4" rx="2.300" ry="1.350" fill="#f4590a" transform="rotate(54 1133.4 660.4)"/><ellipse cx="1144.8" cy="590.8" rx="2.300" ry="1.350" fill="#f4590a" transform="rotate(159 1144.8 590.8)"/><ellipse cx="1143.7" cy="598.2" rx="2.300" ry="1.350" fill="#f4590a" transform="rotate(173 1143.7 598.2)"/><ellipse cx="1143.8" cy="606.1" rx="2.300" ry="1.350" fill="#f4590a" transform="rotate(90 1143.8 606.1)"/><ellipse cx="1144.0" cy="613.1" rx="2.300" ry="1.350" fill="#f4590a" transform="rotate(120 1144.0 613.1)"/><ellipse cx="1143.7" cy="621.2" rx="2.300" ry="1.350" fill="#f4590a" transform="rotate(61 1143.7 621.2)"/><ellipse cx="1144.4" cy="629.6" rx="2.300" ry="1.350" fill="#f4590a" transform="rotate(143 1144.4 629.6)"/><ellipse cx="1144.1" cy="636.2" rx="2.300" ry="1.350" fill="#f4590a" transform="rotate(175 1144.1 636.2)"/><ellipse cx="1144.6" cy="644.7" rx="2.300" ry="1.350" fill="#f4590a" transform="rotate(40 1144.6 644.7)"/><ellipse cx="1143.8" cy="654.0" rx="2.300" ry="1.350" fill="#f4590a" transform="rotate(89 1143.8 654.0)"/><ellipse cx="1150.6" cy="582.3" rx="2.300" ry="1.350" fill="#f4590a" transform="rotate(75 1150.6 582.3)"/><ellipse cx="1159.9" cy="583.4" rx="2.300" ry="1.350" fill="#f4590a" transform="rotate(26 1159.9 583.4)"/><ellipse cx="1150.9" cy="660.7" rx="2.300" ry="1.350" fill="#f4590a" transform="rotate(175 1150.9 660.7)"/><ellipse cx="1159.0" cy="660.5" rx="2.300" ry="1.350" fill="#f4590a" transform="rotate(11 1159.0 660.5)"/><ellipse cx="931.2" cy="583.8" rx="2.300" ry="1.350" fill="#f4590a" transform="rotate(159 931.2 583.8)"/><ellipse cx="931.8" cy="606.0" rx="2.300" ry="1.350" fill="#f4590a" transform="rotate(168 931.8 606.0)"/><ellipse cx="938.2" cy="582.7" rx="2.300" ry="1.350" fill="#f4590a" transform="rotate(168 938.2 582.7)"/><ellipse cx="938.9" cy="604.5" rx="2.300" ry="1.350" fill="#f4590a" transform="rotate(120 938.9 604.5)"/><ellipse cx="954.6" cy="583.0" rx="2.300" ry="1.350" fill="#f4590a" transform="rotate(60 954.6 583.0)"/><ellipse cx="954.3" cy="604.4" rx="2.300" ry="1.350" fill="#f4590a" transform="rotate(50 954.3 604.4)"/><ellipse cx="961.6" cy="583.9" rx="2.300" ry="1.350" fill="#f4590a" transform="rotate(22 961.6 583.9)"/><ellipse cx="962.5" cy="604.7" rx="2.300" ry="1.350" fill="#f4590a" transform="rotate(64 962.5 604.7)"/><ellipse cx="978.0" cy="583.7" rx="2.300" ry="1.350" fill="#f4590a" transform="rotate(78 978.0 583.7)"/><ellipse cx="976.8" cy="605.2" rx="2.300" ry="1.350" fill="#f4590a" transform="rotate(67 976.8 605.2)"/><ellipse cx="932.1" cy="635.0" rx="2.300" ry="1.350" fill="#f4590a" transform="rotate(66 932.1 635.0)"/><ellipse cx="932.0" cy="656.7" rx="2.300" ry="1.350" fill="#f4590a" transform="rotate(74 932.0 656.7)"/><ellipse cx="939.0" cy="635.9" rx="2.300" ry="1.350" fill="#f4590a" transform="rotate(7 939.0 635.9)"/><ellipse cx="937.8" cy="656.8" rx="2.300" ry="1.350" fill="#f4590a" transform="rotate(166 937.8 656.8)"/><ellipse cx="954.4" cy="635.9" rx="2.300" ry="1.350" fill="#f4590a" transform="rotate(162 954.4 635.9)"/><ellipse cx="954.5" cy="657.1" rx="2.300" ry="1.350" fill="#f4590a" transform="rotate(172 954.5 657.1)"/><ellipse cx="962.0" cy="635.1" rx="2.300" ry="1.350" fill="#f4590a" transform="rotate(129 962.0 635.1)"/><ellipse cx="961.5" cy="657.1" rx="2.300" ry="1.350" fill="#f4590a" transform="rotate(1 961.5 657.1)"/><ellipse cx="977.9" cy="636.2" rx="2.300" ry="1.350" fill="#f4590a" transform="rotate(114 977.9 636.2)"/><ellipse cx="978.2" cy="656.7" rx="2.300" ry="1.350" fill="#f4590a" transform="rotate(42 978.2 656.7)"/><ellipse cx="931.4" cy="674.7" rx="2.300" ry="1.350" fill="#f4590a" transform="rotate(172 931.4 674.7)"/><ellipse cx="931.2" cy="695.6" rx="2.300" ry="1.350" fill="#f4590a" transform="rotate(77 931.2 695.6)"/><ellipse cx="938.5" cy="674.7" rx="2.300" ry="1.350" fill="#f4590a" transform="rotate(33 938.5 674.7)"/><ellipse cx="939.0" cy="696.4" rx="2.300" ry="1.350" fill="#f4590a" transform="rotate(148 939.0 696.4)"/><ellipse cx="955.2" cy="674.2" rx="2.300" ry="1.350" fill="#f4590a" transform="rotate(59 955.2 674.2)"/><ellipse cx="954.5" cy="695.8" rx="2.300" ry="1.350" fill="#f4590a" transform="rotate(141 954.5 695.8)"/><ellipse cx="961.1" cy="673.5" rx="2.300" ry="1.350" fill="#f4590a" transform="rotate(136 961.1 673.5)"/><ellipse cx="961.4" cy="695.3" rx="2.300" ry="1.350" fill="#f4590a" transform="rotate(6 961.4 695.3)"/><ellipse cx="977.6" cy="673.7" rx="2.300" ry="1.350" fill="#f4590a" transform="rotate(176 977.6 673.7)"/><ellipse cx="978.1" cy="696.8" rx="2.300" ry="1.350" fill="#f4590a" transform="rotate(48 978.1 696.8)"/><ellipse cx="937.6" cy="612.4" rx="2.300" ry="1.350" fill="#f4590a" transform="rotate(90 937.6 612.4)"/><ellipse cx="938.6" cy="634.9" rx="2.300" ry="1.350" fill="#f4590a" transform="rotate(42 938.6 634.9)"/><ellipse cx="954.7" cy="613.2" rx="2.300" ry="1.350" fill="#f4590a" transform="rotate(121 954.7 613.2)"/><ellipse cx="955.2" cy="635.6" rx="2.300" ry="1.350" fill="#f4590a" transform="rotate(120 955.2 635.6)"/><ellipse cx="961.2" cy="613.5" rx="2.300" ry="1.350" fill="#f4590a" transform="rotate(53 961.2 613.5)"/><ellipse cx="961.9" cy="634.8" rx="2.300" ry="1.350" fill="#f4590a" transform="rotate(133 961.9 634.8)"/><ellipse cx="977.0" cy="612.6" rx="2.300" ry="1.350" fill="#f4590a" transform="rotate(44 977.0 612.6)"/><ellipse cx="976.9" cy="635.6" rx="2.300" ry="1.350" fill="#f4590a" transform="rotate(104 976.9 635.6)"/><ellipse cx="1008.3" cy="673.8" rx="2.300" ry="1.350" fill="#f4590a" transform="rotate(179 1008.3 673.8)"/><ellipse cx="1008.6" cy="695.6" rx="2.300" ry="1.350" fill="#f4590a" transform="rotate(146 1008.6 695.6)"/><ellipse cx="1025.4" cy="674.8" rx="2.300" ry="1.350" fill="#f4590a" transform="rotate(18 1025.4 674.8)"/><ellipse cx="1025.2" cy="696.5" rx="2.300" ry="1.350" fill="#f4590a" transform="rotate(151 1025.2 696.5)"/><ellipse cx="1032.8" cy="673.3" rx="2.300" ry="1.350" fill="#f4590a" transform="rotate(53 1032.8 673.3)"/><ellipse cx="1031.5" cy="695.5" rx="2.300" ry="1.350" fill="#f4590a" transform="rotate(175 1031.5 695.5)"/><ellipse cx="1048.9" cy="674.7" rx="2.300" ry="1.350" fill="#f4590a" transform="rotate(67 1048.9 674.7)"/><ellipse cx="1049.4" cy="695.9" rx="2.300" ry="1.350" fill="#f4590a" transform="rotate(47 1049.4 695.9)"/><ellipse cx="1055.7" cy="674.7" rx="2.300" ry="1.350" fill="#f4590a" transform="rotate(19 1055.7 674.7)"/><ellipse cx="1055.5" cy="696.2" rx="2.300" ry="1.350" fill="#f4590a" transform="rotate(39 1055.5 696.2)"/><ellipse cx="1071.2" cy="673.4" rx="2.300" ry="1.350" fill="#f4590a" transform="rotate(37 1071.2 673.4)"/><ellipse cx="1071.0" cy="696.2" rx="2.300" ry="1.350" fill="#f4590a" transform="rotate(117 1071.0 696.2)"/><ellipse cx="1088.1" cy="673.2" rx="2.300" ry="1.350" fill="#f4590a" transform="rotate(59 1088.1 673.2)"/><ellipse cx="1088.9" cy="695.5" rx="2.300" ry="1.350" fill="#f4590a" transform="rotate(56 1088.9 695.5)"/><ellipse cx="1104.4" cy="674.5" rx="2.300" ry="1.350" fill="#f4590a" transform="rotate(99 1104.4 674.5)"/><ellipse cx="1104.2" cy="695.4" rx="2.300" ry="1.350" fill="#f4590a" transform="rotate(71 1104.2 695.4)"/><ellipse cx="1111.9" cy="674.2" rx="2.300" ry="1.350" fill="#f4590a" transform="rotate(16 1111.9 674.2)"/><ellipse cx="1111.3" cy="696.3" rx="2.300" ry="1.350" fill="#f4590a" transform="rotate(74 1111.3 696.3)"/><ellipse cx="1128.1" cy="673.7" rx="2.300" ry="1.350" fill="#f4590a" transform="rotate(172 1128.1 673.7)"/><ellipse cx="1128.1" cy="696.1" rx="2.300" ry="1.350" fill="#f4590a" transform="rotate(64 1128.1 696.1)"/><ellipse cx="1134.9" cy="674.6" rx="2.300" ry="1.350" fill="#f4590a" transform="rotate(179 1134.9 674.6)"/><ellipse cx="1134.8" cy="695.5" rx="2.300" ry="1.350" fill="#f4590a" transform="rotate(131 1134.8 695.5)"/><ellipse cx="1150.8" cy="673.2" rx="2.300" ry="1.350" fill="#f4590a" transform="rotate(162 1150.8 673.2)"/><ellipse cx="1151.2" cy="696.5" rx="2.300" ry="1.350" fill="#f4590a" transform="rotate(73 1151.2 696.5)"/><ellipse cx="918.8" cy="699.9" rx="2.300" ry="1.350" fill="#f4590a" transform="rotate(29 918.8 699.9)"/><ellipse cx="923.9" cy="700.1" rx="2.300" ry="1.350" fill="#f4590a" transform="rotate(115 923.9 700.1)"/><ellipse cx="932.6" cy="699.2" rx="2.300" ry="1.350" fill="#f4590a" transform="rotate(112 932.6 699.2)"/><ellipse cx="938.4" cy="700.0" rx="2.300" ry="1.350" fill="#f4590a" transform="rotate(26 938.4 700.0)"/><ellipse cx="945.2" cy="700.0" rx="2.300" ry="1.350" fill="#f4590a" transform="rotate(167 945.2 700.0)"/><ellipse cx="951.7" cy="700.0" rx="2.300" ry="1.350" fill="#f4590a" transform="rotate(145 951.7 700.0)"/><ellipse cx="960.3" cy="699.4" rx="2.300" ry="1.350" fill="#f4590a" transform="rotate(23 960.3 699.4)"/><ellipse cx="967.2" cy="701.0" rx="2.300" ry="1.350" fill="#f4590a" transform="rotate(87 967.2 701.0)"/><ellipse cx="972.3" cy="700.9" rx="2.300" ry="1.350" fill="#f4590a" transform="rotate(70 972.3 700.9)"/><ellipse cx="980.9" cy="700.2" rx="2.300" ry="1.350" fill="#f4590a" transform="rotate(148 980.9 700.2)"/><ellipse cx="986.3" cy="700.6" rx="2.300" ry="1.350" fill="#f4590a" transform="rotate(40 986.3 700.6)"/><ellipse cx="993.7" cy="700.7" rx="2.300" ry="1.350" fill="#f4590a" transform="rotate(149 993.7 700.7)"/><ellipse cx="1000.2" cy="699.4" rx="2.300" ry="1.350" fill="#f4590a" transform="rotate(72 1000.2 699.4)"/><ellipse cx="1007.7" cy="699.8" rx="2.300" ry="1.350" fill="#f4590a" transform="rotate(22 1007.7 699.8)"/><ellipse cx="1014.1" cy="700.4" rx="2.300" ry="1.350" fill="#f4590a" transform="rotate(162 1014.1 700.4)"/><ellipse cx="1020.6" cy="700.1" rx="2.300" ry="1.350" fill="#f4590a" transform="rotate(136 1020.6 700.1)"/><ellipse cx="1027.5" cy="700.7" rx="2.300" ry="1.350" fill="#f4590a" transform="rotate(21 1027.5 700.7)"/><ellipse cx="1035.5" cy="700.1" rx="2.300" ry="1.350" fill="#f4590a" transform="rotate(113 1035.5 700.1)"/><ellipse cx="1041.8" cy="699.8" rx="2.300" ry="1.350" fill="#f4590a" transform="rotate(105 1041.8 699.8)"/><ellipse cx="1049.0" cy="700.3" rx="2.300" ry="1.350" fill="#f4590a" transform="rotate(80 1049.0 700.3)"/><ellipse cx="1055.9" cy="699.0" rx="2.300" ry="1.350" fill="#f4590a" transform="rotate(111 1055.9 699.0)"/><ellipse cx="1062.9" cy="699.5" rx="2.300" ry="1.350" fill="#f4590a" transform="rotate(137 1062.9 699.5)"/><ellipse cx="1070.4" cy="699.9" rx="2.300" ry="1.350" fill="#f4590a" transform="rotate(32 1070.4 699.9)"/><ellipse cx="1076.6" cy="699.2" rx="2.300" ry="1.350" fill="#f4590a" transform="rotate(23 1076.6 699.2)"/><ellipse cx="1083.5" cy="699.2" rx="2.300" ry="1.350" fill="#f4590a" transform="rotate(80 1083.5 699.2)"/><ellipse cx="1090.5" cy="699.1" rx="2.300" ry="1.350" fill="#f4590a" transform="rotate(115 1090.5 699.1)"/><ellipse cx="1096.6" cy="700.5" rx="2.300" ry="1.350" fill="#f4590a" transform="rotate(140 1096.6 700.5)"/><ellipse cx="1104.3" cy="699.1" rx="2.300" ry="1.350" fill="#f4590a" transform="rotate(91 1104.3 699.1)"/><ellipse cx="1111.0" cy="700.9" rx="2.300" ry="1.350" fill="#f4590a" transform="rotate(25 1111.0 700.9)"/><ellipse cx="1118.8" cy="701.0" rx="2.300" ry="1.350" fill="#f4590a" transform="rotate(132 1118.8 701.0)"/><ellipse cx="1125.6" cy="699.4" rx="2.300" ry="1.350" fill="#f4590a" transform="rotate(177 1125.6 699.4)"/><ellipse cx="1131.9" cy="700.9" rx="2.300" ry="1.350" fill="#f4590a" transform="rotate(165 1131.9 700.9)"/><ellipse cx="1138.1" cy="700.6" rx="2.300" ry="1.350" fill="#f4590a" transform="rotate(168 1138.1 700.6)"/><ellipse cx="1144.8" cy="699.7" rx="2.300" ry="1.350" fill="#f4590a" transform="rotate(136 1144.8 699.7)"/><ellipse cx="1151.9" cy="700.8" rx="2.300" ry="1.350" fill="#f4590a" transform="rotate(49 1151.9 700.8)"/><ellipse cx="1160.1" cy="699.3" rx="2.300" ry="1.350" fill="#f4590a" transform="rotate(90 1160.1 699.3)"/><ellipse cx="914.7" cy="588.5" rx="2.300" ry="1.350" fill="#f4590a" transform="rotate(47 914.7 588.5)"/><ellipse cx="914.0" cy="596.7" rx="2.300" ry="1.350" fill="#f4590a" transform="rotate(7 914.0 596.7)"/><ellipse cx="913.5" cy="641.5" rx="2.300" ry="1.350" fill="#f4590a" transform="rotate(169 913.5 641.5)"/><ellipse cx="914.3" cy="650.6" rx="2.300" ry="1.350" fill="#f4590a" transform="rotate(30 914.3 650.6)"/><ellipse cx="914.5" cy="680.4" rx="2.300" ry="1.350" fill="#f4590a" transform="rotate(96 914.5 680.4)"/><ellipse cx="914.2" cy="688.8" rx="2.300" ry="1.350" fill="#f4590a" transform="rotate(157 914.2 688.8)"/><ellipse cx="914.1" cy="707.1" rx="2.300" ry="1.350" fill="#f4590a" transform="rotate(159 914.1 707.1)"/><ellipse cx="913.4" cy="714.8" rx="2.300" ry="1.350" fill="#f4590a" transform="rotate(113 913.4 714.8)"/><ellipse cx="1161.3" cy="709.5" rx="2.300" ry="1.350" fill="#f4590a" transform="rotate(48 1161.3 709.5)"/><ellipse cx="1162.3" cy="716.1" rx="2.300" ry="1.350" fill="#f4590a" transform="rotate(65 1162.3 716.1)"/><ellipse cx="1159.4" cy="687.9" rx="2.300" ry="1.350" fill="#f4590a" transform="rotate(32 1159.4 687.9)"/><ellipse cx="931.4" cy="619.3" rx="2.300" ry="1.350" fill="#f4590a" transform="rotate(148 931.4 619.3)"/><ellipse cx="930.6" cy="628.2" rx="2.300" ry="1.350" fill="#f4590a" transform="rotate(177 930.6 628.2)"/><ellipse cx="853.0" cy="202.9" rx="2.300" ry="1.350" fill="#f4590a" transform="rotate(56 853.0 202.9)"/><ellipse cx="869.3" cy="201.8" rx="2.300" ry="1.350" fill="#f4590a" transform="rotate(27 869.3 201.8)"/><ellipse cx="888.0" cy="202.5" rx="2.300" ry="1.350" fill="#f4590a" transform="rotate(92 888.0 202.5)"/><ellipse cx="906.0" cy="201.9" rx="2.300" ry="1.350" fill="#f4590a" transform="rotate(41 906.0 201.9)"/><ellipse cx="923.0" cy="201.7" rx="2.300" ry="1.350" fill="#f4590a" transform="rotate(0 923.0 201.7)"/><ellipse cx="939.2" cy="201.9" rx="2.300" ry="1.350" fill="#f4590a" transform="rotate(64 939.2 201.9)"/><ellipse cx="765.0" cy="220.4" rx="2.300" ry="1.350" fill="#f4590a" transform="rotate(106 765.0 220.4)"/><ellipse cx="782.2" cy="220.4" rx="2.300" ry="1.350" fill="#f4590a" transform="rotate(85 782.2 220.4)"/><ellipse cx="799.8" cy="221.0" rx="2.300" ry="1.350" fill="#f4590a" transform="rotate(44 799.8 221.0)"/><ellipse cx="817.3" cy="219.5" rx="2.300" ry="1.350" fill="#f4590a" transform="rotate(115 817.3 219.5)"/><ellipse cx="836.1" cy="220.7" rx="2.300" ry="1.350" fill="#f4590a" transform="rotate(72 836.1 220.7)"/><ellipse cx="852.4" cy="219.3" rx="2.300" ry="1.350" fill="#f4590a" transform="rotate(116 852.4 219.3)"/><ellipse cx="870.3" cy="219.9" rx="2.300" ry="1.350" fill="#f4590a" transform="rotate(116 870.3 219.9)"/><ellipse cx="887.7" cy="221.0" rx="2.300" ry="1.350" fill="#f4590a" transform="rotate(132 887.7 221.0)"/><ellipse cx="904.8" cy="220.9" rx="2.300" ry="1.350" fill="#f4590a" transform="rotate(8 904.8 220.9)"/><ellipse cx="939.6" cy="220.0" rx="2.300" ry="1.350" fill="#f4590a" transform="rotate(43 939.6 220.0)"/><ellipse cx="764.7" cy="238.6" rx="2.300" ry="1.350" fill="#f4590a" transform="rotate(2 764.7 238.6)"/><ellipse cx="782.8" cy="238.9" rx="2.300" ry="1.350" fill="#f4590a" transform="rotate(26 782.8 238.9)"/><ellipse cx="800.0" cy="238.3" rx="2.300" ry="1.350" fill="#f4590a" transform="rotate(91 800.0 238.3)"/><ellipse cx="818.2" cy="238.7" rx="2.300" ry="1.350" fill="#f4590a" transform="rotate(31 818.2 238.7)"/><ellipse cx="835.1" cy="237.7" rx="2.300" ry="1.350" fill="#f4590a" transform="rotate(9 835.1 237.7)"/><ellipse cx="853.5" cy="238.6" rx="2.300" ry="1.350" fill="#f4590a" transform="rotate(129 853.5 238.6)"/><ellipse cx="869.3" cy="238.7" rx="2.300" ry="1.350" fill="#f4590a" transform="rotate(134 869.3 238.7)"/><ellipse cx="887.7" cy="238.5" rx="2.300" ry="1.350" fill="#f4590a" transform="rotate(81 887.7 238.5)"/><ellipse cx="904.8" cy="237.4" rx="2.300" ry="1.350" fill="#f4590a" transform="rotate(42 904.8 237.4)"/><ellipse cx="921.9" cy="237.8" rx="2.300" ry="1.350" fill="#f4590a" transform="rotate(135 921.9 237.8)"/><ellipse cx="939.9" cy="238.7" rx="2.300" ry="1.350" fill="#f4590a" transform="rotate(128 939.9 238.7)"/><ellipse cx="765.1" cy="256.0" rx="2.300" ry="1.350" fill="#f4590a" transform="rotate(78 765.1 256.0)"/><ellipse cx="783.2" cy="255.9" rx="2.300" ry="1.350" fill="#f4590a" transform="rotate(48 783.2 255.9)"/><ellipse cx="800.8" cy="256.7" rx="2.300" ry="1.350" fill="#f4590a" transform="rotate(39 800.8 256.7)"/><ellipse cx="818.6" cy="255.0" rx="2.300" ry="1.350" fill="#f4590a" transform="rotate(47 818.6 255.0)"/><ellipse cx="834.9" cy="256.3" rx="2.300" ry="1.350" fill="#f4590a" transform="rotate(170 834.9 256.3)"/><ellipse cx="853.2" cy="255.6" rx="2.300" ry="1.350" fill="#f4590a" transform="rotate(158 853.2 255.6)"/><ellipse cx="869.9" cy="255.4" rx="2.300" ry="1.350" fill="#f4590a" transform="rotate(163 869.9 255.4)"/><ellipse cx="888.0" cy="256.2" rx="2.300" ry="1.350" fill="#f4590a" transform="rotate(120 888.0 256.2)"/><ellipse cx="906.2" cy="255.8" rx="2.300" ry="1.350" fill="#f4590a" transform="rotate(151 906.2 255.8)"/><ellipse cx="923.1" cy="256.5" rx="2.300" ry="1.350" fill="#f4590a" transform="rotate(79 923.1 256.5)"/><ellipse cx="939.9" cy="256.0" rx="2.300" ry="1.350" fill="#f4590a" transform="rotate(55 939.9 256.0)"/><ellipse cx="765.0" cy="274.1" rx="2.300" ry="1.350" fill="#f4590a" transform="rotate(14 765.0 274.1)"/><ellipse cx="783.4" cy="273.3" rx="2.300" ry="1.350" fill="#f4590a" transform="rotate(5 783.4 273.3)"/><ellipse cx="799.8" cy="274.7" rx="2.300" ry="1.350" fill="#f4590a" transform="rotate(62 799.8 274.7)"/><ellipse cx="817.3" cy="273.1" rx="2.300" ry="1.350" fill="#f4590a" transform="rotate(7 817.3 273.1)"/><ellipse cx="835.7" cy="274.1" rx="2.300" ry="1.350" fill="#f4590a" transform="rotate(125 835.7 274.1)"/><ellipse cx="853.2" cy="273.1" rx="2.300" ry="1.350" fill="#f4590a" transform="rotate(106 853.2 273.1)"/><ellipse cx="870.0" cy="274.5" rx="2.300" ry="1.350" fill="#f4590a" transform="rotate(148 870.0 274.5)"/><ellipse cx="923.4" cy="273.1" rx="2.300" ry="1.350" fill="#f4590a" transform="rotate(156 923.4 273.1)"/><ellipse cx="940.2" cy="274.7" rx="2.300" ry="1.350" fill="#f4590a" transform="rotate(19 940.2 274.7)"/><ellipse cx="962.6" cy="205.7" rx="2.300" ry="1.350" fill="#f4590a" transform="rotate(6 962.6 205.7)"/><ellipse cx="963.2" cy="228.4" rx="2.300" ry="1.350" fill="#f4590a" transform="rotate(114 963.2 228.4)"/><ellipse cx="963.2" cy="250.1" rx="2.300" ry="1.350" fill="#f4590a" transform="rotate(52 963.2 250.1)"/><ellipse cx="985.6" cy="205.7" rx="2.300" ry="1.350" fill="#f4590a" transform="rotate(136 985.6 205.7)"/><ellipse cx="985.7" cy="249.8" rx="2.300" ry="1.350" fill="#f4590a" transform="rotate(76 985.7 249.8)"/><ellipse cx="1008.2" cy="205.9" rx="2.300" ry="1.350" fill="#f4590a" transform="rotate(51 1008.2 205.9)"/><ellipse cx="1008.9" cy="228.0" rx="2.300" ry="1.350" fill="#f4590a" transform="rotate(58 1008.9 228.0)"/><ellipse cx="1009.2" cy="250.0" rx="2.300" ry="1.350" fill="#f4590a" transform="rotate(153 1009.2 250.0)"/><ellipse cx="1058.3" cy="214.2" rx="2.300" ry="1.350" fill="#f4590a" transform="rotate(74 1058.3 214.2)"/><ellipse cx="1059.6" cy="236.9" rx="2.300" ry="1.350" fill="#f4590a" transform="rotate(62 1059.6 236.9)"/><ellipse cx="1091.9" cy="216.4" rx="2.300" ry="1.350" fill="#f4590a" transform="rotate(39 1091.9 216.4)"/><ellipse cx="1092.0" cy="237.5" rx="2.300" ry="1.350" fill="#f4590a" transform="rotate(148 1092.0 237.5)"/><ellipse cx="781.9" cy="392.7" rx="2.300" ry="1.350" fill="#f4590a" transform="rotate(36 781.9 392.7)"/><ellipse cx="811.2" cy="393.5" rx="2.300" ry="1.350" fill="#f4590a" transform="rotate(1 811.2 393.5)"/><ellipse cx="842.1" cy="393.5" rx="2.300" ry="1.350" fill="#f4590a" transform="rotate(143 842.1 393.5)"/><ellipse cx="870.4" cy="394.4" rx="2.300" ry="1.350" fill="#f4590a" transform="rotate(62 870.4 394.4)"/><ellipse cx="777.6" cy="430.5" rx="2.300" ry="1.350" fill="#f4590a" transform="rotate(170 777.6 430.5)"/><ellipse cx="798.9" cy="430.0" rx="2.300" ry="1.350" fill="#f4590a" transform="rotate(126 798.9 430.0)"/><ellipse cx="843.0" cy="426.9" rx="2.300" ry="1.350" fill="#f4590a" transform="rotate(115 843.0 426.9)"/><ellipse cx="777.4" cy="443.3" rx="2.300" ry="1.350" fill="#f4590a" transform="rotate(125 777.4 443.3)"/><ellipse cx="818.4" cy="444.7" rx="2.300" ry="1.350" fill="#f4590a" transform="rotate(64 818.4 444.7)"/><ellipse cx="798.3" cy="456.1" rx="2.300" ry="1.350" fill="#f4590a" transform="rotate(160 798.3 456.1)"/><ellipse cx="846.9" cy="446.7" rx="2.300" ry="1.350" fill="#f4590a" transform="rotate(5 846.9 446.7)"/><ellipse cx="875.7" cy="447.1" rx="2.300" ry="1.350" fill="#f4590a" transform="rotate(162 875.7 447.1)"/><ellipse cx="769.3" cy="483.7" rx="2.300" ry="1.350" fill="#f4590a" transform="rotate(159 769.3 483.7)"/><ellipse cx="796.3" cy="483.8" rx="2.300" ry="1.350" fill="#f4590a" transform="rotate(96 796.3 483.8)"/><ellipse cx="886.8" cy="503.2" rx="2.300" ry="1.350" fill="#f4590a" transform="rotate(116 886.8 503.2)"/><ellipse cx="885.9" cy="526.3" rx="2.300" ry="1.350" fill="#f4590a" transform="rotate(28 885.9 526.3)"/><ellipse cx="885.8" cy="544.5" rx="2.300" ry="1.350" fill="#f4590a" transform="rotate(134 885.8 544.5)"/><ellipse cx="960.8" cy="480.0" rx="2.300" ry="1.350" fill="#f4590a" transform="rotate(139 960.8 480.0)"/><ellipse cx="961.0" cy="498.4" rx="2.300" ry="1.350" fill="#f4590a" transform="rotate(83 961.0 498.4)"/><ellipse cx="960.5" cy="522.5" rx="2.300" ry="1.350" fill="#f4590a" transform="rotate(34 960.5 522.5)"/><ellipse cx="960.2" cy="542.5" rx="2.300" ry="1.350" fill="#f4590a" transform="rotate(152 960.2 542.5)"/><ellipse cx="984.3" cy="473.8" rx="2.300" ry="1.350" fill="#f4590a" transform="rotate(45 984.3 473.8)"/><ellipse cx="984.4" cy="547.0" rx="2.300" ry="1.350" fill="#f4590a" transform="rotate(29 984.4 547.0)"/><ellipse cx="961.9" cy="473.8" rx="2.300" ry="1.350" fill="#f4590a" transform="rotate(176 961.9 473.8)"/><ellipse cx="777.5" cy="536.0" rx="2.300" ry="1.350" fill="#f4590a" transform="rotate(173 777.5 536.0)"/><ellipse cx="792.9" cy="536.4" rx="2.300" ry="1.350" fill="#f4590a" transform="rotate(177 792.9 536.4)"/><ellipse cx="776.0" cy="600.2" rx="2.300" ry="1.350" fill="#f4590a" transform="rotate(78 776.0 600.2)"/><ellipse cx="792.5" cy="611.1" rx="2.300" ry="1.350" fill="#f4590a" transform="rotate(19 792.5 611.1)"/><ellipse cx="768.8" cy="642.4" rx="2.300" ry="1.350" fill="#f4590a" transform="rotate(6 768.8 642.4)"/><ellipse cx="885.6" cy="648.7" rx="2.300" ry="1.350" fill="#f4590a" transform="rotate(125 885.6 648.7)"/><ellipse cx="766.4" cy="703.3" rx="2.300" ry="1.350" fill="#f4590a" transform="rotate(83 766.4 703.3)"/><ellipse cx="883.9" cy="702.4" rx="2.300" ry="1.350" fill="#f4590a" transform="rotate(73 883.9 702.4)"/><ellipse cx="884.7" cy="724.4" rx="2.300" ry="1.350" fill="#f4590a" transform="rotate(77 884.7 724.4)"/><ellipse cx="784.6" cy="919.5" rx="2.300" ry="1.350" fill="#f4590a" transform="rotate(76 784.6 919.5)"/><ellipse cx="784.8" cy="939.3" rx="2.300" ry="1.350" fill="#f4590a" transform="rotate(158 784.8 939.3)"/><rect x="957.5" y="709.5" width="10.1" height="8.8" fill="#5a5a5a"/><rect x="1056.1" y="709.2" width="5.4" height="9.1" fill="#5a5a5a"/><rect x="1090.3" y="709.2" width="4.0" height="9.1" fill="#5a5a5a"/><rect x="957.4" y="630.8" width="10.2" height="8.2" fill="#5a5a5a"/><ellipse cx="834" cy="203.5" rx="6.300" ry="4.300" fill="#d98a3a" transform="rotate(12 834 203.5)"/><path d="M828.5 201.0l10.500 1.200l-2.500 5.300z" fill="#3038a8"/><ellipse cx="1097.5" cy="434.2" rx="6.300" ry="4.300" fill="#d98a3a" transform="rotate(12 1097.5 434.2)"/><path d="M1092.0 431.7l10.500 1.200l-2.500 5.300z" fill="#3038a8"/><ellipse cx="1154" cy="434" rx="6.300" ry="4.300" fill="#d98a3a" transform="rotate(-20 1154 434)"/><path d="M1148.500 436.500l10.500-5.500l-4.500 6.500z" fill="#3038a8"/><circle cx="921.7" cy="220.2" r="2.700" fill="#c98b3c"/><path d="M919.7 218.39999999999998l4 .800l-2 3.200z" fill="#0f7d6a"/><circle cx="1015.9" cy="436.7" r="2.700" fill="#c98b3c"/><path d="M1013.9 434.9l4 .800l-2 3.200z" fill="#0f7d6a"/><circle cx="1042.3" cy="436.7" r="2.700" fill="#c98b3c"/><path d="M1040.3 434.9l4 .800l-2 3.200z" fill="#0f7d6a"/><circle cx="1009" cy="655" r="2.700" fill="#c98b3c"/><path d="M1007 653.2l4 .800l-2 3.200z" fill="#0f7d6a"/><circle cx="1160.2" cy="660" r="2.700" fill="#c98b3c"/><path d="M1158.2 658.2l4 .800l-2 3.200z" fill="#0f7d6a"/><circle cx="1021.3" cy="672.9" r="2.700" fill="#c98b3c"/><path d="M1019.3 671.1l4 .800l-2 3.200z" fill="#0f7d6a"/><circle cx="1088.4" cy="673.9" r="2.700" fill="#c98b3c"/><path d="M1086.4 672.1l4 .800l-2 3.200z" fill="#0f7d6a"/><circle cx="1137.9" cy="673.9" r="2.700" fill="#c98b3c"/><path d="M1135.9 672.1l4 .800l-2 3.200z" fill="#0f7d6a"/><ellipse cx="901.3" cy="267" rx="3.800" ry="2.600" fill="#d98a3a" transform="rotate(35 901.3 267)"/><path d="M898.8 265l5 1.500l-2.500 3z" fill="#7a1fb0"/><ellipse cx="1007.7" cy="460" rx="3.800" ry="2.600" fill="#d98a3a" transform="rotate(35 1007.7 460)"/><path d="M1005.2 458l5 1.500l-2.500 3z" fill="#7a1fb0"/><ellipse cx="1009" cy="508.2" rx="3.800" ry="2.600" fill="#d98a3a" transform="rotate(35 1009 508.2)"/><path d="M1006.5 506.2l5 1.500l-2.500 3z" fill="#7a1fb0"/><ellipse cx="1008" cy="543.1" rx="3.800" ry="2.600" fill="#d98a3a" transform="rotate(35 1008 543.1)"/><path d="M1005.5 541.1l5 1.500l-2.500 3z" fill="#7a1fb0"/><ellipse cx="979.1" cy="581.7" rx="3.800" ry="2.600" fill="#d98a3a" transform="rotate(35 979.1 581.7)"/><path d="M976.6 579.7l5 1.500l-2.500 3z" fill="#7a1fb0"/><ellipse cx="1010.9" cy="594.8" rx="3.800" ry="2.600" fill="#d98a3a" transform="rotate(35 1010.9 594.8)"/><path d="M1008.4 592.8l5 1.500l-2.500 3z" fill="#7a1fb0"/><ellipse cx="979.1" cy="672.3" rx="3.800" ry="2.600" fill="#d98a3a" transform="rotate(35 979.1 672.3)"/><path d="M976.6 670.3l5 1.500l-2.500 3z" fill="#7a1fb0"/><path d="M383.500 937v14.500M492.500 937v14.500M383.500 944.300h109" stroke="#000" stroke-width="2.200" fill="none"/><g stroke="#000" stroke-width="2.600"><path d="M1413 317h25M1425.500 304.500v25M1416.700 308.200l17.600 17.600M1434.300 308.200l-17.600 17.600"/></g></svg>
<div class="t" style="left:377px;top:953.73px;font-size:14.5px;font-weight:700;color:#000;letter-spacing:0.370px;">10 м</div>
<svg style="left:1567.0px;top:116.0px" width="24" height="24" viewBox="0 0 24 24"><path d="M17.500 2.800h5v5.500M22.500 17.500v5.500h-5M7.300 23h-5.500v-5" fill="none" stroke="#6b739e" stroke-width="1.600"/><path d="M3.200 4.600l14 5.100l-6.200 3.100z" fill="#6f779f"/><path d="M3.200 4.600l7.800 8.200l-2.300 5.400z" fill="#3c3f5a"/></svg>
<svg style="left:1567.0px;top:159.0px" width="24" height="24" viewBox="0 0 24 24"><rect x="1" y="1.500" width="22" height="21" rx="2" fill="#a3131f"/><g fill="#f47a3c"><rect x="4" y="4.500" width="5.500" height="3.600" rx=".8"/><rect x="11" y="4.500" width="9" height="3.600" rx=".8"/><rect x="4" y="10.200" width="9" height="3.600" rx=".8"/><rect x="14.500" y="10.200" width="5.500" height="3.600" rx=".8"/><rect x="4" y="15.900" width="5.500" height="3.600" rx=".8"/><rect x="11" y="15.900" width="9" height="3.600" rx=".8"/></g></svg>
<svg style="left:1567.0px;top:201.0px" width="24" height="24" viewBox="0 0 24 24"><path d="M6.500 4.500h11a1.500 1.500 0 0 1 1.300.8l4 9.500v2.700a2 2 0 0 1-2 2h-17.600a2 2 0 0 1-2-2v-2.700l4-9.500a1.500 1.500 0 0 1 1.300-.8z" fill="#8f97c2"/><path d="M1.200 15h21.600v2.500a2 2 0 0 1-2 2h-17.600a2 2 0 0 1-2-2z" fill="#7a82ad"/></svg>
<svg style="left:1567.0px;top:243.0px" width="24" height="24" viewBox="0 0 24 24"><path d="M1 14.500h7v-4.500h7v-4.500h8v5l-11 9h-11z" fill="#8f97c2"/><path d="M15 5.500h8v5h-8zM8 10h7v0" fill="#a9b0d4"/><path d="M1 14.500h7l4 0v0l-4 5h-7z" fill="#6e769f"/><path d="M8 10h7v4.500h-7z" fill="#9aa1c9"/></svg>
<svg style="left:1567.0px;top:285.0px" width="24" height="24" viewBox="0 0 24 24"><rect x="1" y="7" width="22" height="4.500" rx=".8" fill="#fdc40d"/><path d="M4.500 11.500h6l-1.200 1.500v3h1.500v1.800h-6.600v-1.800h1.500v-3zM13.500 11.500h6l-1.200 1.500v3h1.500v1.800h-6.600v-1.800h1.500v-3z" fill="#4a4d60"/></svg>
<svg style="left:1567.0px;top:327.0px" width="24" height="24" viewBox="0 0 24 24"><rect x="4.500" y="1.500" width="14" height="19" fill="#7a4a2e"/><rect x="6.500" y="3.500" width="10" height="17" fill="#d9ae94"/><circle cx="12.500" cy="11" r="1.200" fill="#5a3520"/><rect x="2" y="20" width="19.500" height="3" fill="#7a82ad"/></svg>
<svg style="left:1567.0px;top:369.0px" width="24" height="24" viewBox="0 0 24 24"><rect x="1.200" y="1.500" width="21.600" height="21" rx="3" fill="#3c4160"/><rect x="4" y="4.500" width="5" height="15" fill="#2f7fe0"/><rect x="11" y="4.500" width="9" height="15" fill="#4d9af0"/><path d="M11 4.500h9v15z" fill="#86bcf7"/></svg>
<svg style="left:1567.0px;top:411.0px" width="24" height="24" viewBox="0 0 24 24"><path d="M9 21.500h-4a2.500 2.500 0 0 1-2.500-2.500v-14a2.500 2.500 0 0 1 2.500-2.500h14a2.500 2.500 0 0 1 2.500 2.500v14a2.500 2.500 0 0 1-2.500 2.500h-4" fill="#ddebfb" stroke="#a5132a" stroke-width="2.600"/></svg>
<svg style="left:1567.0px;top:453.0px" width="24" height="24" viewBox="0 0 24 24"><path d="M17 7.500v-3.500h-11.500v16h11.500v-3.500" fill="none" stroke="#0fa468" stroke-width="3"/><path d="M10 10.700h7v-3.700l6 5l-6 5v-3.700h-7z" fill="#0fa468"/></svg>
<svg style="left:1567.0px;top:495.0px" width="24" height="24" viewBox="0 0 24 24"><circle cx="12" cy="4" r="2.800" fill="#f58a3c"/><path d="M12 7.500c4 0 7 2 8 5.500l-2 1l-2.500-2.500v11h-2.500v-6.500h-2v6.500h-2.500v-11l-2.500 2.500l-2-1c1-3.500 4-5.500 8-5.500z" fill="#f58a3c"/></svg>
<svg style="left:1567.0px;top:537.0px" width="24" height="24" viewBox="0 0 24 24"><path d="M4 20h13.500a3.500 3.500 0 0 0 0-7.500h-10a3.500 3.500 0 0 1 0-7.500h10" fill="none" stroke="#f03a4a" stroke-width="2.700"/><circle cx="4" cy="20" r="2.800" fill="#f03a4a"/><path d="M16.500 .500l6.500 4.500l-6.500 4.500z" fill="#f03a4a"/></svg>
<div class="abs" style="left:1558.7px;top:570.5px;width:40px;height:40px;background:#e0e0e0;border-radius:7px;"></div>
<svg style="left:1567.0px;top:579.0px" width="24" height="24" viewBox="0 0 24 24"><rect x="3" y="3" width="18" height="18" fill="#b7bcdb" stroke="#7c83ad" stroke-width="2"/><g fill="#6f769f"><rect x="0.500" y="0.500" width="5" height="5"/><rect x="18.500" y="0.500" width="5" height="5"/><rect x="0.500" y="18.500" width="5" height="5"/><rect x="18.500" y="18.500" width="5" height="5"/></g><path d="M7.500 9h9M7.500 12.500h6.500M7.500 16h9" stroke="#7c83ad" stroke-width="1.600"/></svg>
<svg style="left:1567.0px;top:621.0px" width="24" height="24" viewBox="0 0 24 24"><path d="M11 .500c1.500 3.500 8 7 8 14a7 7 0 0 1-4 7c1-2.500-.5-5-3-6.500c-2.500 1.500-4 4-3 6.500a7 7 0 0 1-4-7c0-3 2-4.500 3-7c1 1 1.500 2 1.500 3.500c2-2.500 2.500-6 1.500-10.500z" fill="#f58a3c"/></svg>
<svg style="left:1567.0px;top:663.0px" width="24" height="24" viewBox="0 0 24 24"><circle cx="12" cy="12" r="9.700" fill="#b7bcdb" stroke="#33374f" stroke-width="2.400"/><g fill="#33374f"><path d="M12 12c-3-2-3-6 0-8c1 2.500 1.500 5 0 8z"/><path d="M12 12c2-3 6-3 8 0c-2.500 1-5 1.500-8 0z"/><path d="M12 12c3 2 3 6 0 8c-1-2.500-1.500-5 0-8z"/><path d="M12 12c-2 3-6 3-8 0c2.500-1 5-1.500 8 0z"/></g><circle cx="12" cy="12" r="1.800" fill="#33374f"/></svg>
<svg style="left:1567.0px;top:705.0px" width="24" height="24" viewBox="0 0 24 24"><rect x="1" y="3.500" width="22" height="16.500" rx="2" fill="#33374f" stroke="#7c83ad" stroke-width="1.200"/><path d="M6 12c1.500-3 3.500-3 5.500 0s4 3 6 0" fill="none" stroke="#10cf86" stroke-width="2"/></svg>
<svg style="left:1567.0px;top:747.0px" width="24" height="24" viewBox="0 0 24 24"><path d="M5.500 7.500h17.500v8.500h-17.500a4.250 4.250 0 0 1 0-8.500z" fill="#fdb614"/><circle cx="5.500" cy="11.800" r="1.800" fill="#fff"/><path d="M10 7.500h2.500v5h-2.500zM14.500 7.500h2v3.500h-2zM18.500 7.500h2.500v5h-2.500z" fill="#33374f"/></svg>
<svg style="left:1567.0px;top:789.0px" width="24" height="24" viewBox="0 0 24 24"><path d="M2.500 2.500h19v5.500h-2.500v-2.500h-5.300v13h2.800v2.800h-9v-2.800h2.800v-13h-5.300v2.500h-2.500z" fill="#33374f" stroke="#33374f" stroke-width=".6" stroke-linejoin="round"/></svg>
<svg style="left:1567.0px;top:833.0px" width="24" height="24" viewBox="0 0 24 24"><path d="M3.500 20.500h19.500" stroke="#1177e2" stroke-width="2.400"/><path d="M3.500 11l6.500-9l7 4.500l-6.500 9.500l-6.500 2.500z" fill="#fdb614"/><path d="M10 2l1.300-1.500a4 4 0 0 1 6.500 4l-.8 2z" fill="#f5124d"/><path d="M3.500 13.500l5.500 3.500l-5 1.800z" fill="#33374f"/></svg>
<svg style="left:1567.0px;top:872.0px" width="24" height="24" viewBox="0 0 24 24"><path d="M2 2.500v19M22 2.500v19" stroke="#7c83ad" stroke-width="1.800"/><path d="M6 12h12" stroke="#fdb614" stroke-width="2.200"/><path d="M3.500 12l5-4.500v9zM20.500 12l-5-4.500v9z" fill="#fdb614"/></svg>
<svg style="left:1567.0px;top:916.0px" width="24" height="24" viewBox="0 0 24 24"><rect x="8.500" y="8" width="14" height="14" rx="2.500" fill="#f9f9f9" stroke="#33374f" stroke-width="2.400"/><path d="M3.500 6l10 10M11 5.500l-8.500 9.500" stroke="#33374f" stroke-width="2"/><circle cx="3.500" cy="3.500" r="2.300" fill="none" stroke="#f5124d" stroke-width="1.800"/><circle cx="11.500" cy="3.500" r="2.300" fill="none" stroke="#f5124d" stroke-width="1.800"/></svg>
<div class="t" style="left:1700px;top:120.30px;font-size:15px;font-weight:700;color:#111;letter-spacing:-0.394px;">Область расчета</div>
<div class="abs" style="left:1613.3px;top:160px;width:295.2px;height:109.5px;background:#f9f9f9;border:1px solid #dfe5ec;border-radius:4px;"></div>
<div class="abs" style="left:1620px;top:158px;width:114px;height:5px;background:#f9f9f9;"></div>
<div class="t" style="left:1624px;top:152.60px;font-size:15px;font-weight:400;color:#111;letter-spacing:-0.115px;">Размер ячейки:</div>
<div class="t" style="left:1704px;top:186.33px;font-size:14.5px;font-weight:400;color:#222;letter-spacing:0.000px;">1</div>
<div class="t" style="left:1717px;top:186.33px;font-size:14.5px;font-weight:400;color:#222;letter-spacing:0.000px;">·</div>
<div class="t" style="left:1725px;top:186.33px;font-size:14.5px;font-weight:400;color:#222;letter-spacing:0.000px;">2</div>
<div class="t" style="left:1739px;top:177.77px;font-size:11.5px;font-weight:400;color:#222;letter-spacing:0.289px;">- 2</div>
<div class="t" style="left:1758px;top:186.33px;font-size:14.5px;font-weight:400;color:#222;letter-spacing:0.000px;">(</div>
<div class="t" style="left:1766px;top:189.53px;font-size:14.5px;font-weight:400;color:#222;letter-spacing:-0.411px;">0,25</div>
<div class="t" style="left:1797px;top:186.33px;font-size:14.5px;font-weight:400;color:#222;letter-spacing:0.000px;">)</div>
<div class="t" style="left:1807px;top:186.33px;font-size:14.5px;font-weight:400;color:#222;letter-spacing:0.000px;">м</div>
<div class="abs" style="left:1632px;top:231px;width:257.5px;height:2px;background:#1177e2;border-radius:1px;"></div>
<svg style="left:1743.8px;top:223px" width="18" height="18" viewBox="0 0 18 18"><circle cx="9" cy="9" r="8.300" fill="#fff" stroke="#1177e2" stroke-width="1.600"/></svg>
<div class="abs" style="left:1640px;top:245px;width:1px;height:5px;background:#222;"></div>
<div class="abs" style="left:1656.5px;top:245px;width:1px;height:5px;background:#222;"></div>
<div class="abs" style="left:1688px;top:245px;width:1px;height:5px;background:#222;"></div>
<div class="abs" style="left:1752px;top:245px;width:1px;height:5px;background:#222;"></div>
<div class="abs" style="left:1880.5px;top:245px;width:1px;height:5px;background:#222;"></div>
<div class="abs" style="left:1613.3px;top:294px;width:295.2px;height:99.5px;background:#f9f9f9;border:1px solid #dfe5ec;border-radius:4px;"></div>
<div class="abs" style="left:1620px;top:292px;width:124px;height:5px;background:#f9f9f9;"></div>
<div class="t" style="left:1624px;top:286.60px;font-size:15px;font-weight:400;color:#111;letter-spacing:-0.098px;">Открытые грани:</div>
<div class="abs" style="left:1623.8px;top:308.8px;width:16px;height:16px;background:#fff;border:1.300px solid #1b7be0;border-radius:2px;"></div>
<svg style="left:1623.8px;top:308.8px" width="16" height="16" viewBox="0 0 16 16"><path d="M3.500 3.500l9 9M12.500 3.500l-9 9" stroke="#1b7be0" stroke-width="1.300"/></svg>
<div class="t" style="left:1645px;top:309.40px;font-size:15px;font-weight:400;color:#111;letter-spacing:-0.060px;">Боковые</div>
<div class="abs" style="left:1623.8px;top:336.8px;width:16px;height:16px;background:#fff;border:1.300px solid #1b7be0;border-radius:2px;"></div>
<div class="t" style="left:1645px;top:337.40px;font-size:15px;font-weight:400;color:#111;letter-spacing:-0.427px;">Верхняя</div>
<div class="abs" style="left:1623.8px;top:364.8px;width:16px;height:16px;background:#fff;border:1.300px solid #1b7be0;border-radius:2px;"></div>
<div class="t" style="left:1645px;top:365.40px;font-size:15px;font-weight:400;color:#111;letter-spacing:0.044px;">Нижняя</div>
<div class="t" style="left:16px;top:1001.57px;font-size:13.5px;font-weight:400;color:#222;letter-spacing:0.161px;">X:  -25</div>
<div class="t" style="left:128px;top:1001.57px;font-size:13.5px;font-weight:400;color:#222;letter-spacing:0.447px;">Y:  -6</div>
<div class="t" style="left:240px;top:1001.57px;font-size:13.5px;font-weight:400;color:#222;letter-spacing:0.434px;">Z:  0</div>
<div class="abs" style="left:350px;top:997px;width:1px;height:21px;background:#555;"></div>
</body></html>
